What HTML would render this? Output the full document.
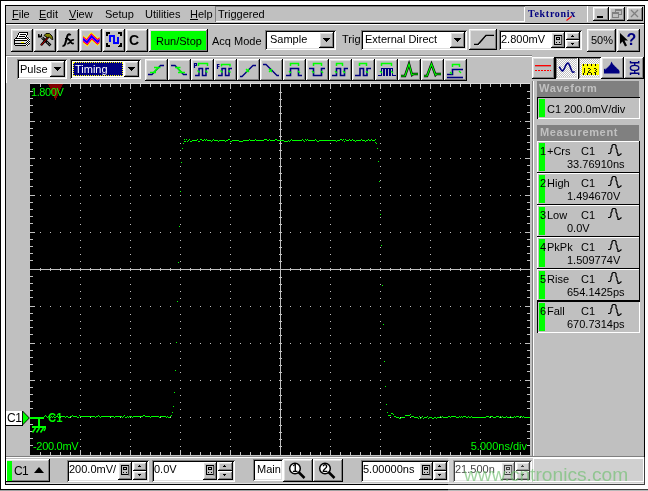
<!DOCTYPE html><html><head><meta charset="utf-8"><style>
html,body{margin:0;padding:0;}
body{width:648px;height:491px;position:relative;overflow:hidden;background:#fff;font-family:"Liberation Sans",sans-serif;}
body>div,body>svg{position:absolute;box-sizing:border-box;}
.t{white-space:nowrap;will-change:transform;}
svg{will-change:transform;}
.b{box-shadow:inset -1px -1px #000, inset 1px 1px #fff, inset -2px -2px #808080, inset 2px 2px #dfdfdf;}
.s{box-shadow:inset 1px 1px #808080, inset -1px -1px #fff, inset 2px 2px #000, inset -2px -2px #dfdfdf;}
u{text-decoration:underline;text-underline-offset:1px;}
</style></head><body>
<div style="left:0px;top:0px;width:648px;height:1px;background:#000;"></div>
<div style="left:0px;top:0px;width:1px;height:491px;background:#000;"></div>
<div style="left:0px;top:489px;width:648px;height:1px;background:#000;"></div>
<div style="left:0px;top:490px;width:648px;height:1px;background:#a0a0a0;"></div>
<div style="left:5px;top:5px;width:640px;height:480px;border:1px solid #000;background:#c0c0c0"></div>
<div style="left:6px;top:23px;width:638px;height:1px;background:#000;"></div>
<div style="left:6px;top:24px;width:638px;height:1px;background:#fff;"></div>
<div class="t" style="left:12px;top:9px;font-size:11px;line-height:11px;color:#000;font-weight:normal;font-family:'Liberation Sans', sans-serif;"><u>F</u>ile</div>
<div class="t" style="left:39px;top:9px;font-size:11px;line-height:11px;color:#000;font-weight:normal;font-family:'Liberation Sans', sans-serif;"><u>E</u>dit</div>
<div class="t" style="left:69px;top:9px;font-size:11px;line-height:11px;color:#000;font-weight:normal;font-family:'Liberation Sans', sans-serif;"><u>V</u>iew</div>
<div class="t" style="left:105px;top:9px;font-size:11px;line-height:11px;color:#000;font-weight:normal;font-family:'Liberation Sans', sans-serif;">Setup</div>
<div class="t" style="left:145px;top:9px;font-size:11px;line-height:11px;color:#000;font-weight:normal;font-family:'Liberation Sans', sans-serif;">Utilities</div>
<div class="t" style="left:190px;top:9px;font-size:11px;line-height:11px;color:#000;font-weight:normal;font-family:'Liberation Sans', sans-serif;"><u>H</u>elp</div>
<div style="left:215px;top:6px;width:310px;height:16px;box-shadow:inset 1px 1px #808080, inset -1px -1px #fff"></div>
<div class="t" style="left:218px;top:9px;font-size:11px;line-height:11px;color:#000;font-weight:normal;font-family:'Liberation Sans', sans-serif;">Triggered</div>
<div style="left:587px;top:6px;width:1px;height:16px;background:#fff;"></div>
<div class="t" style="left:528px;top:9px;font-size:10px;line-height:10px;color:#000080;font-weight:bold;font-family:'Liberation Serif', serif;letter-spacing:0.7px">Tektronix</div>
<svg style="left:565px;top:15px" width="8" height="7"><path d="M1.5 5.5L6.5 1.5" stroke="#f00" stroke-width="1.1"/></svg>
<div class="b" style="left:593px;top:7px;width:16px;height:14px;background:#c0c0c0;"></div>
<div style="left:597px;top:16px;width:6px;height:2px;background:#000;"></div>
<div class="b" style="left:609px;top:7px;width:16px;height:14px;background:#c0c0c0;"></div>
<div class="b" style="left:627px;top:7px;width:16px;height:14px;background:#c0c0c0;"></div>
<svg style="left:609px;top:7px" width="16" height="14"><g fill="none" stroke="#808080" stroke-width="1" shape-rendering="crispEdges"><rect x="6.5" y="2.5" width="6" height="5"/><line x1="6" y1="3.5" x2="13" y2="3.5"/><rect x="3.5" y="5.5" width="6" height="5" fill="#c0c0c0"/><line x1="3" y1="6.5" x2="10" y2="6.5"/></g></svg>
<svg style="left:627px;top:7px" width="16" height="14"><g stroke="#808080" stroke-width="1.3"><line x1="4" y1="3" x2="11" y2="10"/><line x1="11" y1="3" x2="4" y2="10"/></g></svg>
<div class="b" style="left:11px;top:29px;width:22px;height:23px;background:#c0c0c0;"></div>
<div class="b" style="left:34px;top:29px;width:22px;height:23px;background:#c0c0c0;"></div>
<div class="b" style="left:57px;top:29px;width:22px;height:23px;background:#c0c0c0;"></div>
<div class="b" style="left:80px;top:29px;width:22px;height:23px;background:#c0c0c0;"></div>
<div class="b" style="left:103px;top:29px;width:22px;height:23px;background:#c0c0c0;"></div>
<div class="b" style="left:126px;top:29px;width:22px;height:23px;background:#c0c0c0;"></div>
<div class="b" style="left:149px;top:29px;width:59px;height:23px;background:#c0c0c0;"></div>
<div style="left:151px;top:31px;width:55px;height:19px;background:#00ff00;"></div>
<div class="t" style="left:156px;top:36px;font-size:11px;line-height:11px;color:#000;font-weight:normal;font-family:'Liberation Sans', sans-serif;">Run/Stop</div>
<div class="t" style="left:212px;top:36px;font-size:11px;line-height:11px;color:#000;font-weight:normal;font-family:'Liberation Sans', sans-serif;">Acq Mode</div>
<div class="s" style="left:265px;top:30px;width:71px;height:20px;background:#fff;"></div>
<div class="b" style="left:319px;top:32px;width:15px;height:16px;background:#c0c0c0;"></div>
<svg style="left:323px;top:38px" width="7" height="4"><path d="M0 0h7l-3.5 4z" fill="#000" shape-rendering="crispEdges"/></svg>
<div class="t" style="left:270px;top:34px;font-size:11px;line-height:11px;color:#000;font-weight:normal;font-family:'Liberation Sans', sans-serif;">Sample</div>
<div class="t" style="left:342px;top:34px;font-size:11px;line-height:11px;color:#000;font-weight:normal;font-family:'Liberation Sans', sans-serif;">Trig</div>
<div class="s" style="left:361px;top:30px;width:106px;height:20px;background:#fff;"></div>
<div class="b" style="left:450px;top:32px;width:15px;height:16px;background:#c0c0c0;"></div>
<svg style="left:454px;top:38px" width="7" height="4"><path d="M0 0h7l-3.5 4z" fill="#000" shape-rendering="crispEdges"/></svg>
<div class="t" style="left:365px;top:34px;font-size:11px;line-height:11px;color:#000;font-weight:normal;font-family:'Liberation Sans', sans-serif;">External Direct</div>
<div class="b" style="left:469px;top:29px;width:28px;height:21px;background:#c0c0c0;"></div>
<svg style="left:469px;top:29px" width="28" height="21"><g fill="none" shape-rendering="crispEdges"><path d="M5 15.5h4l8-9h8" stroke="#fff" transform="translate(0,1)"/><path d="M5 15.5h4l8-9h8" stroke="#000" stroke-width="1.6" shape-rendering="auto"/></g></svg>
<div class="s" style="left:499px;top:30px;width:83px;height:20px;background:#fff;"></div>
<div class="t" style="left:501px;top:34px;font-size:11px;line-height:11px;color:#000;font-weight:normal;font-family:'Liberation Sans', sans-serif;">2.800mV</div>
<div class="b" style="left:551px;top:32px;width:14px;height:16px;background:#c0c0c0;"></div>
<svg style="left:551px;top:32px" width="14" height="16"><g fill="none" stroke="#000" shape-rendering="crispEdges"><rect x="3.5" y="3.5" width="7" height="9"/><rect x="5.5" y="5.5" width="3" height="2"/><path d="M5 10.5h1M8 10.5h1"/></g><path d="M11 4v10" stroke="#808080"/></svg>
<div class="b" style="left:566px;top:32px;width:14px;height:8px;background:#c0c0c0;"></div>
<div class="b" style="left:566px;top:40px;width:14px;height:8px;background:#c0c0c0;"></div>
<div style="left:572px;top:35px;width:1px;height:1px;background:#000;"></div>
<div style="left:571px;top:36px;width:3px;height:1px;background:#000;"></div>
<div style="left:571px;top:43px;width:3px;height:1px;background:#000;"></div>
<div style="left:572px;top:44px;width:1px;height:1px;background:#000;"></div>
<div class="b" style="left:587px;top:29px;width:29px;height:23px;background:#c0c0c0;"></div>
<div class="t" style="left:591px;top:35px;font-size:11px;line-height:11px;color:#000;font-weight:normal;font-family:'Liberation Sans', sans-serif;">50%</div>
<div class="b" style="left:617px;top:29px;width:23px;height:23px;background:#c0c0c0;"></div>
<svg style="left:617px;top:29px" width="23" height="23"><path d="M3 4V15L5.5 12.5 8 17.5 10 16.5 7.5 11.5H11Z" fill="#000"/><text x="9.5" y="15.5" font-family="Liberation Sans" font-weight="bold" font-size="16" fill="#000080">?</text></svg>
<div style="left:6px;top:55px;width:526px;height:1px;background:#808080;"></div>
<div style="left:6px;top:56px;width:526px;height:1px;background:#fff;"></div>
<svg style="left:11px;top:29px" width="22" height="23" shape-rendering="crispEdges"><rect x="8" y="3" width="1" height="1" fill="#000"/><rect x="9" y="3" width="1" height="1" fill="#000"/><rect x="10" y="3" width="1" height="1" fill="#000"/><rect x="11" y="3" width="1" height="1" fill="#000"/><rect x="12" y="3" width="1" height="1" fill="#000"/><rect x="13" y="3" width="1" height="1" fill="#000"/><rect x="14" y="3" width="1" height="1" fill="#000"/><rect x="15" y="3" width="1" height="1" fill="#000"/><rect x="16" y="3" width="1" height="1" fill="#000"/><rect x="7" y="4" width="1" height="1" fill="#000"/><rect x="16" y="4" width="1" height="1" fill="#000"/><rect x="8" y="4" width="1" height="1" fill="#fff"/><rect x="9" y="4" width="1" height="1" fill="#fff"/><rect x="10" y="4" width="1" height="1" fill="#fff"/><rect x="11" y="4" width="1" height="1" fill="#fff"/><rect x="12" y="4" width="1" height="1" fill="#fff"/><rect x="13" y="4" width="1" height="1" fill="#fff"/><rect x="14" y="4" width="1" height="1" fill="#fff"/><rect x="15" y="4" width="1" height="1" fill="#fff"/><rect x="7" y="5" width="1" height="1" fill="#000"/><rect x="16" y="5" width="1" height="1" fill="#000"/><rect x="8" y="5" width="1" height="1" fill="#fff"/><rect x="9" y="5" width="1" height="1" fill="#000"/><rect x="10" y="5" width="1" height="1" fill="#000"/><rect x="11" y="5" width="1" height="1" fill="#000"/><rect x="12" y="5" width="1" height="1" fill="#000"/><rect x="13" y="5" width="1" height="1" fill="#000"/><rect x="14" y="5" width="1" height="1" fill="#000"/><rect x="15" y="5" width="1" height="1" fill="#fff"/><rect x="6" y="6" width="1" height="1" fill="#000"/><rect x="15" y="6" width="1" height="1" fill="#000"/><rect x="7" y="6" width="1" height="1" fill="#fff"/><rect x="8" y="6" width="1" height="1" fill="#fff"/><rect x="9" y="6" width="1" height="1" fill="#fff"/><rect x="10" y="6" width="1" height="1" fill="#fff"/><rect x="11" y="6" width="1" height="1" fill="#fff"/><rect x="12" y="6" width="1" height="1" fill="#fff"/><rect x="13" y="6" width="1" height="1" fill="#fff"/><rect x="14" y="6" width="1" height="1" fill="#fff"/><rect x="6" y="7" width="1" height="1" fill="#000"/><rect x="15" y="7" width="1" height="1" fill="#000"/><rect x="7" y="7" width="1" height="1" fill="#fff"/><rect x="8" y="7" width="1" height="1" fill="#000"/><rect x="9" y="7" width="1" height="1" fill="#000"/><rect x="10" y="7" width="1" height="1" fill="#000"/><rect x="11" y="7" width="1" height="1" fill="#000"/><rect x="12" y="7" width="1" height="1" fill="#000"/><rect x="13" y="7" width="1" height="1" fill="#000"/><rect x="14" y="7" width="1" height="1" fill="#fff"/><rect x="5" y="8" width="1" height="1" fill="#000"/><rect x="14" y="8" width="1" height="1" fill="#000"/><rect x="6" y="8" width="1" height="1" fill="#fff"/><rect x="7" y="8" width="1" height="1" fill="#fff"/><rect x="8" y="8" width="1" height="1" fill="#fff"/><rect x="9" y="8" width="1" height="1" fill="#fff"/><rect x="10" y="8" width="1" height="1" fill="#fff"/><rect x="11" y="8" width="1" height="1" fill="#fff"/><rect x="12" y="8" width="1" height="1" fill="#fff"/><rect x="13" y="8" width="1" height="1" fill="#fff"/><rect x="4" y="9" width="1" height="1" fill="#000"/><rect x="5" y="9" width="1" height="1" fill="#000"/><rect x="6" y="9" width="1" height="1" fill="#000"/><rect x="7" y="9" width="1" height="1" fill="#000"/><rect x="8" y="9" width="1" height="1" fill="#000"/><rect x="9" y="9" width="1" height="1" fill="#000"/><rect x="10" y="9" width="1" height="1" fill="#000"/><rect x="11" y="9" width="1" height="1" fill="#000"/><rect x="12" y="9" width="1" height="1" fill="#000"/><rect x="13" y="9" width="1" height="1" fill="#000"/><rect x="14" y="9" width="1" height="1" fill="#000"/><rect x="15" y="9" width="1" height="1" fill="#000"/><rect x="3" y="10" width="1" height="1" fill="#000"/><rect x="3" y="11" width="1" height="1" fill="#000"/><rect x="3" y="12" width="1" height="1" fill="#000"/><rect x="3" y="13" width="1" height="1" fill="#000"/><rect x="3" y="14" width="1" height="1" fill="#000"/><rect x="3" y="15" width="1" height="1" fill="#000"/><rect x="4" y="10" width="1" height="1" fill="#fff"/><rect x="5" y="10" width="1" height="1" fill="#fff"/><rect x="6" y="10" width="1" height="1" fill="#fff"/><rect x="7" y="10" width="1" height="1" fill="#fff"/><rect x="8" y="10" width="1" height="1" fill="#fff"/><rect x="9" y="10" width="1" height="1" fill="#fff"/><rect x="10" y="10" width="1" height="1" fill="#fff"/><rect x="11" y="10" width="1" height="1" fill="#fff"/><rect x="12" y="10" width="1" height="1" fill="#fff"/><rect x="13" y="10" width="1" height="1" fill="#fff"/><rect x="14" y="10" width="1" height="1" fill="#fff"/><rect x="4" y="11" width="1" height="1" fill="#000"/><rect x="5" y="11" width="1" height="1" fill="#000"/><rect x="6" y="11" width="1" height="1" fill="#000"/><rect x="7" y="11" width="1" height="1" fill="#000"/><rect x="8" y="11" width="1" height="1" fill="#000"/><rect x="9" y="11" width="1" height="1" fill="#000"/><rect x="10" y="11" width="1" height="1" fill="#000"/><rect x="11" y="11" width="1" height="1" fill="#000"/><rect x="12" y="11" width="1" height="1" fill="#000"/><rect x="13" y="11" width="1" height="1" fill="#000"/><rect x="14" y="11" width="1" height="1" fill="#000"/><rect x="15" y="11" width="1" height="1" fill="#000"/><rect x="4" y="12" width="1" height="1" fill="#dfdfdf"/><rect x="4" y="13" width="1" height="1" fill="#dfdfdf"/><rect x="5" y="12" width="1" height="1" fill="#dfdfdf"/><rect x="5" y="13" width="1" height="1" fill="#dfdfdf"/><rect x="6" y="12" width="1" height="1" fill="#dfdfdf"/><rect x="6" y="13" width="1" height="1" fill="#dfdfdf"/><rect x="7" y="12" width="1" height="1" fill="#dfdfdf"/><rect x="7" y="13" width="1" height="1" fill="#dfdfdf"/><rect x="8" y="12" width="1" height="1" fill="#dfdfdf"/><rect x="8" y="13" width="1" height="1" fill="#dfdfdf"/><rect x="9" y="12" width="1" height="1" fill="#dfdfdf"/><rect x="9" y="13" width="1" height="1" fill="#dfdfdf"/><rect x="10" y="12" width="1" height="1" fill="#dfdfdf"/><rect x="10" y="13" width="1" height="1" fill="#ff0"/><rect x="11" y="12" width="1" height="1" fill="#dfdfdf"/><rect x="11" y="13" width="1" height="1" fill="#ff0"/><rect x="12" y="12" width="1" height="1" fill="#dfdfdf"/><rect x="12" y="13" width="1" height="1" fill="#ff0"/><rect x="13" y="12" width="1" height="1" fill="#dfdfdf"/><rect x="13" y="13" width="1" height="1" fill="#dfdfdf"/><rect x="14" y="12" width="1" height="1" fill="#dfdfdf"/><rect x="14" y="13" width="1" height="1" fill="#dfdfdf"/><rect x="4" y="14" width="1" height="1" fill="#000"/><rect x="5" y="14" width="1" height="1" fill="#000"/><rect x="6" y="14" width="1" height="1" fill="#000"/><rect x="7" y="14" width="1" height="1" fill="#000"/><rect x="8" y="14" width="1" height="1" fill="#000"/><rect x="9" y="14" width="1" height="1" fill="#000"/><rect x="10" y="14" width="1" height="1" fill="#000"/><rect x="11" y="14" width="1" height="1" fill="#000"/><rect x="12" y="14" width="1" height="1" fill="#000"/><rect x="13" y="14" width="1" height="1" fill="#000"/><rect x="14" y="14" width="1" height="1" fill="#000"/><rect x="15" y="14" width="1" height="1" fill="#fff"/><rect x="4" y="15" width="1" height="1" fill="#dfdfdf"/><rect x="5" y="15" width="1" height="1" fill="#dfdfdf"/><rect x="6" y="15" width="1" height="1" fill="#dfdfdf"/><rect x="7" y="15" width="1" height="1" fill="#dfdfdf"/><rect x="8" y="15" width="1" height="1" fill="#dfdfdf"/><rect x="9" y="15" width="1" height="1" fill="#dfdfdf"/><rect x="10" y="15" width="1" height="1" fill="#dfdfdf"/><rect x="11" y="15" width="1" height="1" fill="#dfdfdf"/><rect x="12" y="15" width="1" height="1" fill="#dfdfdf"/><rect x="13" y="15" width="1" height="1" fill="#dfdfdf"/><rect x="14" y="15" width="1" height="1" fill="#dfdfdf"/><rect x="4" y="16" width="1" height="1" fill="#000"/><rect x="5" y="16" width="1" height="1" fill="#000"/><rect x="6" y="16" width="1" height="1" fill="#000"/><rect x="7" y="16" width="1" height="1" fill="#000"/><rect x="8" y="16" width="1" height="1" fill="#000"/><rect x="9" y="16" width="1" height="1" fill="#000"/><rect x="10" y="16" width="1" height="1" fill="#000"/><rect x="11" y="16" width="1" height="1" fill="#000"/><rect x="12" y="16" width="1" height="1" fill="#000"/><rect x="13" y="16" width="1" height="1" fill="#000"/><rect x="14" y="16" width="1" height="1" fill="#000"/><rect x="15" y="16" width="1" height="1" fill="#fff"/><rect x="16" y="7" width="1" height="1" fill="#fff"/><rect x="15" y="8" width="1" height="1" fill="#fff"/><rect x="16" y="8" width="1" height="1" fill="#000"/><rect x="16" y="9" width="1" height="1" fill="#fff"/><rect x="17" y="9" width="1" height="1" fill="#000"/><rect x="18" y="9" width="1" height="1" fill="#fff"/><rect x="15" y="10" width="1" height="1" fill="#fff"/><rect x="16" y="10" width="1" height="1" fill="#000"/><rect x="17" y="10" width="1" height="1" fill="#fff"/><rect x="18" y="10" width="1" height="1" fill="#000"/><rect x="16" y="11" width="1" height="1" fill="#fff"/><rect x="17" y="11" width="1" height="1" fill="#000"/><rect x="18" y="11" width="1" height="1" fill="#fff"/><rect x="15" y="12" width="1" height="1" fill="#fff"/><rect x="16" y="12" width="1" height="1" fill="#000"/><rect x="17" y="12" width="1" height="1" fill="#fff"/><rect x="18" y="12" width="1" height="1" fill="#000"/><rect x="15" y="13" width="1" height="1" fill="#000"/><rect x="16" y="13" width="1" height="1" fill="#fff"/><rect x="17" y="13" width="1" height="1" fill="#000"/><rect x="18" y="13" width="1" height="1" fill="#fff"/><rect x="16" y="14" width="1" height="1" fill="#000"/><rect x="17" y="14" width="1" height="1" fill="#fff"/><rect x="18" y="14" width="1" height="1" fill="#000"/><rect x="15" y="15" width="1" height="1" fill="#000"/><rect x="16" y="15" width="1" height="1" fill="#fff"/><rect x="17" y="15" width="1" height="1" fill="#000"/><rect x="16" y="16" width="1" height="1" fill="#000"/><rect x="17" y="16" width="1" height="1" fill="#fff"/></svg>
<svg style="left:34px;top:29px" width="22" height="23">
<path d="M4 5h1.5v1.5h1.5V5h1v2.5l-1 1H4z" fill="#000"/>
<path d="M8 8.5l8.5 8" stroke="#000" stroke-width="2.8"/>
<path d="M8 8.5l8.5 8" stroke="#fff" stroke-width="0.9" stroke-dasharray="1 1.3"/>
<path d="M7 16.3l7.5-8.5" stroke="#000" stroke-width="2.4"/>
<path d="M7 16.3l7.5-8.5" stroke="#c00000" stroke-width="1"/>
<path d="M10 6.5L12 4.5H15.5L18 7 19 10.5 17.5 10.3 15.5 8 13.5 8.5Z" fill="#808000" stroke="#000" stroke-width="0.9"/>
</svg>
<svg style="left:57px;top:29px" width="22" height="23"><g fill="none" stroke="#000">
<path d="M13.5 6.3C12.8 4.8 11 4.8 10.4 6.8L8.2 14.8C7.8 16.4 6.8 17.2 5.5 16.6" stroke-width="2"/>
<path d="M8 9.6H11.8" stroke-width="1.2"/>
<path d="M10.5 11C12 10 12.9 11 13.5 12.5S15 15 16.8 14.3M17 11C15.6 10.4 14.5 11 13.5 12.5S11.8 15 10.3 14.5" stroke-width="1.7"/>
</g></svg>
<svg style="left:80px;top:29px" width="22" height="23"><defs><clipPath id="wc"><rect x="3" y="0" width="16.5" height="23"/></clipPath></defs><g fill="none" stroke-linejoin="miter" stroke-linecap="butt" clip-path="url(#wc)">
<path d="M0 7.8L7 13.2 11.5 7.4 17.5 12.8 21 10" stroke="#ff0" stroke-width="6"/>
<path d="M0 7.8L7 13.2 11.5 7.4 17.5 12.8 21 10" stroke="#f00" stroke-width="4.4"/>
<path d="M0 7.8L7 13.2 11.5 7.4 17.5 12.8 21 10" stroke="#f0f" stroke-width="3"/>
<path d="M0 7.8L7 13.2 11.5 7.4 17.5 12.8 21 10" stroke="#00f" stroke-width="1.8"/>
</g></svg>
<svg style="left:103px;top:29px" width="22" height="23" shape-rendering="crispEdges">
<path d="M3 3h4v2H5v2H3zM19 3h-4v2h2v2h2zM3 18h4v-2H5v-2H3zM19 18h-4v-2h2v-2h2z" fill="#000"/>
<path d="M6 6h10v10H6z" fill="none" stroke="#d8c8a8" stroke-width="1" stroke-dasharray="1 1"/>
<path d="M7 13V7h4v7h4V8" fill="none" stroke="#0000ff" stroke-width="2.2"/>
</svg>
<div class="t" style="left:129px;top:33px;font-size:14px;line-height:14px;color:#000;font-weight:bold;font-family:'Liberation Sans', sans-serif;">C</div>
<div style="left:6px;top:56px;width:1px;height:27px;background:#fff;"></div>
<div class="s" style="left:17px;top:59px;width:50px;height:20px;background:#fff;"></div>
<div class="b" style="left:50px;top:61px;width:15px;height:16px;background:#c0c0c0;"></div>
<svg style="left:54px;top:67px" width="7" height="4"><path d="M0 0h7l-3.5 4z" fill="#000" shape-rendering="crispEdges"/></svg>
<div class="t" style="left:20px;top:64px;font-size:11px;line-height:11px;color:#000;font-weight:normal;font-family:'Liberation Sans', sans-serif;">Pulse</div>
<div class="s" style="left:70px;top:59px;width:71px;height:20px;background:#fff;"></div>
<div class="b" style="left:124px;top:61px;width:15px;height:16px;background:#c0c0c0;"></div>
<svg style="left:128px;top:67px" width="7" height="4"><path d="M0 0h7l-3.5 4z" fill="#000" shape-rendering="crispEdges"/></svg>
<div style="left:73px;top:62px;width:50px;height:14px;background:#000080;outline:1px dotted #ff0;outline-offset:-1px"></div>
<div class="t" style="left:75px;top:64px;font-size:11px;line-height:11px;color:#fff;font-weight:normal;font-family:'Liberation Sans', sans-serif;">Timing</div>
<div class="b" style="left:145px;top:59px;width:23px;height:22px;background:#c0c0c0;"></div>
<div class="b" style="left:168px;top:59px;width:23px;height:22px;background:#c0c0c0;"></div>
<div class="b" style="left:191px;top:59px;width:23px;height:22px;background:#c0c0c0;"></div>
<div class="b" style="left:214px;top:59px;width:23px;height:22px;background:#c0c0c0;"></div>
<div class="b" style="left:237px;top:59px;width:23px;height:22px;background:#c0c0c0;"></div>
<div class="b" style="left:260px;top:59px;width:23px;height:22px;background:#c0c0c0;"></div>
<div class="b" style="left:283px;top:59px;width:23px;height:22px;background:#c0c0c0;"></div>
<div class="b" style="left:306px;top:59px;width:23px;height:22px;background:#c0c0c0;"></div>
<div class="b" style="left:329px;top:59px;width:23px;height:22px;background:#c0c0c0;"></div>
<div class="b" style="left:352px;top:59px;width:23px;height:22px;background:#c0c0c0;"></div>
<div class="b" style="left:375px;top:59px;width:23px;height:22px;background:#c0c0c0;"></div>
<div class="b" style="left:398px;top:59px;width:23px;height:22px;background:#c0c0c0;"></div>
<div class="b" style="left:421px;top:59px;width:23px;height:22px;background:#c0c0c0;"></div>
<div class="b" style="left:444px;top:59px;width:23px;height:22px;background:#c0c0c0;"></div>
<svg style="left:145px;top:59px" width="23" height="22"><g fill="none"><path d="M3 15.5h4l8.5-9h3.5" stroke="#000080" stroke-width="1.3"/><path d="M9 8.5h6.5M5 13.5h6M13.5 8.5l-5 5" stroke="#00ff00" stroke-width="1.6"/></g></svg>
<svg style="left:168px;top:59px" width="23" height="22"><g fill="none"><path d="M3 6.5h4l8.5 9h3.5" stroke="#000080" stroke-width="1.3"/><path d="M7 8.5h5.5M10 13.5h7M9 8.5l5 5" stroke="#00ff00" stroke-width="1.6"/></g></svg>
<svg style="left:191px;top:59px" width="23" height="22"><g fill="none"><path d="M3.5 9V4.5h2v2h-2" stroke="#000080" stroke-width="1.2"/><path d="M7.5 7V4.5h9V7" stroke="#00ff00" stroke-width="1.5"/><path d="M4 16.5h4V9.5h3.5v7h3.5V9.5h3" stroke="#000080" stroke-width="1.5"/><path d="M6.5 11.5l2 2M14.5 11.5l2 2" stroke="#00ff00" stroke-width="1.3"/></g></svg>
<svg style="left:214px;top:59px" width="23" height="22"><g fill="none"><path d="M5.5 5.5h-2V10M3.5 7.5h2" stroke="#000080" stroke-width="1.2"/><path d="M7.5 7.5V5.5h8.5v2" stroke="#00ff00" stroke-width="1.5"/><path d="M4 16.5h4V9.5h3.5v7h3.5V9.5h3" stroke="#000080" stroke-width="1.5"/><path d="M6.5 11.5l2 2M14.5 11.5l2 2" stroke="#00ff00" stroke-width="1.3"/></g></svg>
<svg style="left:237px;top:59px" width="23" height="22"><g fill="none"><path d="M3 17.5h2l11-11h3" stroke="#000080" stroke-width="1.3"/><path d="M9 10l3 3M12 10l-3 3" stroke="#00ff00" stroke-width="1.3"/></g></svg>
<svg style="left:260px;top:59px" width="23" height="22"><g fill="none"><path d="M3 5.5h3l11 11h2" stroke="#000080" stroke-width="1.3"/><path d="M9 10l3 3M12 10l-3 3" stroke="#00ff00" stroke-width="1.3"/></g></svg>
<svg style="left:283px;top:59px" width="23" height="22"><g fill="none"><path d="M7.5 7V4.5h8V7" stroke="#00ff00" stroke-width="1.5"/><path d="M3 16.5h4.5V9.5h8v7H19" stroke="#000080" stroke-width="1.6"/><path d="M6 12l2 2M15 12l2 2" stroke="#00ff00" stroke-width="1.3"/></g></svg>
<svg style="left:306px;top:59px" width="23" height="22"><g fill="none"><path d="M7.5 7V4.5h8V7" stroke="#00ff00" stroke-width="1.5"/><path d="M3 9.5h4.5v7h8v-7H19" stroke="#000080" stroke-width="1.6"/><path d="M6 12l2 2M15 12l2 2" stroke="#00ff00" stroke-width="1.3"/></g></svg>
<svg style="left:329px;top:59px" width="23" height="22"><g fill="none"><path d="M7.5 7V4.5h6V7" stroke="#00ff00" stroke-width="1.5"/><path d="M3 16.5h4.5V9.5h4v7h4v-7H19" stroke="#000080" stroke-width="1.6"/><path d="M6 12l2 2M14 12l2 2" stroke="#00ff00" stroke-width="1.3"/></g></svg>
<svg style="left:352px;top:59px" width="23" height="22"><g fill="none"><path d="M7.5 7V4.5h7V7" stroke="#00ff00" stroke-width="1.5"/><path d="M3 16.5h5V9.5h3.5v7H15V9.5h4" stroke="#000080" stroke-width="1.6"/><path d="M14 12l2 2" stroke="#00ff00" stroke-width="1.3"/></g></svg>
<svg style="left:375px;top:59px" width="23" height="22"><g fill="none"><path d="M6.5 7V4.5h10V7" stroke="#00ff00" stroke-width="1.5"/><path d="M3 16.5h3.5V9.5h2v7h1V9.5h2v7h1V9.5h2v7h1V9.5h2v7h3" stroke="#000080" stroke-width="1.1" shape-rendering="crispEdges"/><path d="M5 12l2 2M16 12l2 2" stroke="#00ff00" stroke-width="1.2"/></g></svg>
<svg style="left:398px;top:59px" width="23" height="22"><g fill="none"><path d="M3 17h4l4-12 3 11 1.5-1H20" stroke="#000" stroke-width="2.4"/><path d="M3 17h4l4-12 3 11 1.5-1H20" stroke="#00ff00" stroke-width="1.2"/></g></svg>
<svg style="left:421px;top:59px" width="23" height="22"><g fill="none"><path d="M3 17h3l4.5-12 4 11 1-1H20" stroke="#000" stroke-width="2.4"/><path d="M3 17h3l4.5-12 4 11 1-1H20" stroke="#00ff00" stroke-width="1.2"/></g></svg>
<svg style="left:444px;top:59px" width="23" height="22"><g fill="none"><path d="M8.5 8V5.5h7V8" stroke="#00ff00" stroke-width="1.5"/><path d="M3 15.5h5.5V10.5H19" stroke="#000080" stroke-width="1.6"/><path d="M3 18.5h16" stroke="#000080" stroke-width="1.6"/><path d="M6 13l2 2M15 12l2 2" stroke="#00ff00" stroke-width="1.3"/></g></svg>
<div class="b" style="left:532px;top:57px;width:23px;height:22px;background:#c0c0c0;"></div>
<div style="left:555px;top:57px;width:23px;height:22px;background-color:#fff;background-image:linear-gradient(45deg,#c0c0c0 25%,transparent 25%,transparent 75%,#c0c0c0 75%),linear-gradient(45deg,#c0c0c0 25%,transparent 25%,transparent 75%,#c0c0c0 75%);background-size:2px 2px;background-position:0 0,1px 1px;box-shadow:inset 1px 1px #000, inset -1px -1px #fff, inset 2px 2px #808080, inset -2px -2px #dfdfdf"></div>
<div style="left:578px;top:57px;width:23px;height:22px;background-color:#fff;background-image:linear-gradient(45deg,#c0c0c0 25%,transparent 25%,transparent 75%,#c0c0c0 75%),linear-gradient(45deg,#c0c0c0 25%,transparent 25%,transparent 75%,#c0c0c0 75%);background-size:2px 2px;background-position:0 0,1px 1px;box-shadow:inset 1px 1px #000, inset -1px -1px #fff, inset 2px 2px #808080, inset -2px -2px #dfdfdf"></div>
<div class="b" style="left:601px;top:57px;width:23px;height:22px;background:#c0c0c0;"></div>
<div class="b" style="left:624px;top:57px;width:20px;height:22px;background:#c0c0c0;"></div>
<svg style="left:532px;top:57px" width="23" height="22" shape-rendering="crispEdges"><path d="M3 8h16v1H3z" fill="#f00"/><path d="M3 9h16v1H3z" fill="#c04040" opacity="0.5"/><path d="M3 13h2v1H3zM6 13h2v1H6zM9 13h2v1H9zM12 13h2v1h-2zM15 13h2v1h-2zM18 13h1v1h-1z" fill="#f00"/></svg>
<svg style="left:555px;top:57px" width="23" height="22"><path d="M4.3 9.6C5.5 12 6.5 14 7.5 13.9 9.5 13.7 10.5 6.1 12.8 6.1 15 6.1 16 15.3 18 15.3 18.8 15.3 19.2 14.8 19.5 14.3" fill="none" stroke="#000080" stroke-width="1.6"/></svg>
<svg style="left:578px;top:57px" width="23" height="22" shape-rendering="crispEdges"><rect x="4" y="7" width="17" height="11" fill="#ff0"/><path d="M5 7h1v2H5zM9 7h1v2H9zM13 7h1v2h-1zM17 7h1v2h-1zM5 16h1v2H5zM9 16h1v2H9zM13 16h1v2h-1zM17 16h1v2h-1z" fill="#000"/><path d="M6 11h1v5H6zM10 11h2v1h-2zM12 12h1v1h-1zM11 13h1v1h-1zM10 14h1v1h-1zM10 15h3v1h-3zM16 11h2v1h-2zM18 12h1v1h-1zM17 13h1v1h-1zM18 14h1v1h-1zM16 15h2v1h-2z" fill="#000" opacity="0.85"/></svg>
<svg style="left:601px;top:57px" width="23" height="22"><path d="M3 16.5V12L4.5 11.5V13L6.5 9.8V11.3L8.5 7.8V9.3L10.5 4.5L12.5 8.3V7.3L14.5 10.3V9.3L16.5 12.3V11.3L18.5 14V16.5Z" fill="#000080"/></svg>
<svg style="left:624px;top:57px" width="20" height="22"><g fill="none" stroke="#000080" stroke-width="1.4"><path d="M6.5 4V5.8H14.7V4M10.7 5.8V8.3M10.7 13.5V16M6.5 18V16.2H14.7V18"/><ellipse cx="10.6" cy="10.9" rx="4.2" ry="2.5"/></g></svg>
<div style="left:532px;top:81px;width:1px;height:375px;background:#808080;"></div>
<div style="left:533px;top:81px;width:1px;height:375px;background:#fff;"></div>
<div style="left:537px;top:81px;width:102px;height:16px;background:#808080;"></div>
<div class="t" style="left:539px;top:83px;font-size:11px;line-height:11px;color:#c0c0c0;font-weight:bold;font-family:'Liberation Sans', sans-serif;letter-spacing:0.7px">Waveform</div>
<div style="left:537px;top:97px;width:103px;height:22px;box-shadow:inset 1px 1px #000, inset -1px -1px #fff"></div>
<div style="left:539px;top:99px;width:6px;height:18px;background:#00ff00;"></div>
<div class="t" style="left:547px;top:104px;font-size:11px;line-height:11px;color:#000;font-weight:normal;font-family:'Liberation Sans', sans-serif;">C1 200.0mV/div</div>
<div style="left:537px;top:125px;width:102px;height:16px;background:#808080;"></div>
<div class="t" style="left:540px;top:127px;font-size:11px;line-height:11px;color:#c0c0c0;font-weight:bold;font-family:'Liberation Sans', sans-serif;letter-spacing:0.65px">Measurement</div>
<div style="left:537px;top:141px;width:103px;height:32px;box-shadow:inset -1px -1px #000, inset 1px 1px #fff"></div>
<div style="left:539px;top:143px;width:6px;height:28px;background:#00ff00;"></div>
<div class="t" style="left:540px;top:146px;font-size:11px;line-height:11px;color:#000;font-weight:normal;font-family:'Liberation Sans', sans-serif;">1</div>
<div class="t" style="left:547px;top:146px;font-size:11px;line-height:11px;color:#000;font-weight:normal;font-family:'Liberation Sans', sans-serif;">+Crs</div>
<div class="t" style="left:581px;top:146px;font-size:11px;line-height:11px;color:#000;font-weight:normal;font-family:'Liberation Sans', sans-serif;">C1</div>
<svg style="left:605px;top:143px" width="18" height="14"><path d="M3 10.5H5L6 8.5V6L7 4.5V2.5L8 1.5H10L11 2.5V5L12 7V9L13 11V12.5H14L16.5 10.5" fill="none" stroke="#000" stroke-width="1.2"/></svg>
<div class="t" style="left:567px;top:159px;font-size:11px;line-height:11px;color:#000;font-weight:normal;font-family:'Liberation Sans', sans-serif;">33.76910ns</div>
<div style="left:537px;top:173px;width:103px;height:32px;box-shadow:inset -1px -1px #000, inset 1px 1px #fff"></div>
<div style="left:539px;top:175px;width:6px;height:28px;background:#00ff00;"></div>
<div class="t" style="left:540px;top:178px;font-size:11px;line-height:11px;color:#000;font-weight:normal;font-family:'Liberation Sans', sans-serif;">2</div>
<div class="t" style="left:547px;top:178px;font-size:11px;line-height:11px;color:#000;font-weight:normal;font-family:'Liberation Sans', sans-serif;">High</div>
<div class="t" style="left:581px;top:178px;font-size:11px;line-height:11px;color:#000;font-weight:normal;font-family:'Liberation Sans', sans-serif;">C1</div>
<svg style="left:605px;top:175px" width="18" height="14"><path d="M3 10.5H5L6 8.5V6L7 4.5V2.5L8 1.5H10L11 2.5V5L12 7V9L13 11V12.5H14L16.5 10.5" fill="none" stroke="#000" stroke-width="1.2"/></svg>
<div class="t" style="left:567px;top:191px;font-size:11px;line-height:11px;color:#000;font-weight:normal;font-family:'Liberation Sans', sans-serif;">1.494670V</div>
<div style="left:537px;top:205px;width:103px;height:32px;box-shadow:inset -1px -1px #000, inset 1px 1px #fff"></div>
<div style="left:539px;top:207px;width:6px;height:28px;background:#00ff00;"></div>
<div class="t" style="left:540px;top:210px;font-size:11px;line-height:11px;color:#000;font-weight:normal;font-family:'Liberation Sans', sans-serif;">3</div>
<div class="t" style="left:547px;top:210px;font-size:11px;line-height:11px;color:#000;font-weight:normal;font-family:'Liberation Sans', sans-serif;">Low</div>
<div class="t" style="left:581px;top:210px;font-size:11px;line-height:11px;color:#000;font-weight:normal;font-family:'Liberation Sans', sans-serif;">C1</div>
<svg style="left:605px;top:207px" width="18" height="14"><path d="M3 10.5H5L6 8.5V6L7 4.5V2.5L8 1.5H10L11 2.5V5L12 7V9L13 11V12.5H14L16.5 10.5" fill="none" stroke="#000" stroke-width="1.2"/></svg>
<div class="t" style="left:567px;top:223px;font-size:11px;line-height:11px;color:#000;font-weight:normal;font-family:'Liberation Sans', sans-serif;">0.0V</div>
<div style="left:537px;top:237px;width:103px;height:32px;box-shadow:inset -1px -1px #000, inset 1px 1px #fff"></div>
<div style="left:539px;top:239px;width:6px;height:28px;background:#00ff00;"></div>
<div class="t" style="left:540px;top:242px;font-size:11px;line-height:11px;color:#000;font-weight:normal;font-family:'Liberation Sans', sans-serif;">4</div>
<div class="t" style="left:547px;top:242px;font-size:11px;line-height:11px;color:#000;font-weight:normal;font-family:'Liberation Sans', sans-serif;">PkPk</div>
<div class="t" style="left:581px;top:242px;font-size:11px;line-height:11px;color:#000;font-weight:normal;font-family:'Liberation Sans', sans-serif;">C1</div>
<svg style="left:605px;top:239px" width="18" height="14"><path d="M3 10.5H5L6 8.5V6L7 4.5V2.5L8 1.5H10L11 2.5V5L12 7V9L13 11V12.5H14L16.5 10.5" fill="none" stroke="#000" stroke-width="1.2"/></svg>
<div class="t" style="left:567px;top:255px;font-size:11px;line-height:11px;color:#000;font-weight:normal;font-family:'Liberation Sans', sans-serif;">1.509774V</div>
<div style="left:537px;top:269px;width:103px;height:32px;box-shadow:inset -1px -1px #000, inset 1px 1px #fff"></div>
<div style="left:539px;top:271px;width:6px;height:28px;background:#00ff00;"></div>
<div class="t" style="left:540px;top:274px;font-size:11px;line-height:11px;color:#000;font-weight:normal;font-family:'Liberation Sans', sans-serif;">5</div>
<div class="t" style="left:547px;top:274px;font-size:11px;line-height:11px;color:#000;font-weight:normal;font-family:'Liberation Sans', sans-serif;">Rise</div>
<div class="t" style="left:581px;top:274px;font-size:11px;line-height:11px;color:#000;font-weight:normal;font-family:'Liberation Sans', sans-serif;">C1</div>
<svg style="left:605px;top:271px" width="18" height="14"><path d="M3 10.5H5L6 8.5V6L7 4.5V2.5L8 1.5H10L11 2.5V5L12 7V9L13 11V12.5H14L16.5 10.5" fill="none" stroke="#000" stroke-width="1.2"/></svg>
<div class="t" style="left:567px;top:287px;font-size:11px;line-height:11px;color:#000;font-weight:normal;font-family:'Liberation Sans', sans-serif;">654.1425ps</div>
<div style="left:537px;top:301px;width:103px;height:32px;box-shadow:inset 1px 1px #000, inset -1px -1px #fff"></div>
<div style="left:539px;top:303px;width:6px;height:28px;background:#00ff00;"></div>
<div class="t" style="left:540px;top:306px;font-size:11px;line-height:11px;color:#000;font-weight:normal;font-family:'Liberation Sans', sans-serif;">6</div>
<div class="t" style="left:547px;top:306px;font-size:11px;line-height:11px;color:#000;font-weight:normal;font-family:'Liberation Sans', sans-serif;">Fall</div>
<div class="t" style="left:581px;top:306px;font-size:11px;line-height:11px;color:#000;font-weight:normal;font-family:'Liberation Sans', sans-serif;">C1</div>
<svg style="left:605px;top:303px" width="18" height="14"><path d="M3 10.5H5L6 8.5V6L7 4.5V2.5L8 1.5H10L11 2.5V5L12 7V9L13 11V12.5H14L16.5 10.5" fill="none" stroke="#000" stroke-width="1.2"/></svg>
<div class="t" style="left:567px;top:319px;font-size:11px;line-height:11px;color:#000;font-weight:normal;font-family:'Liberation Sans', sans-serif;">670.7314ps</div>
<svg style="left:30px;top:84px" width="500" height="371" shape-rendering="crispEdges"><rect x="0" y="0" width="500" height="371" fill="#000"/><rect x="10" y="0" width="1" height="3" fill="#c0c0c0"/><rect x="10" y="368" width="1" height="3" fill="#c0c0c0"/><rect x="20" y="0" width="1" height="3" fill="#c0c0c0"/><rect x="20" y="368" width="1" height="3" fill="#c0c0c0"/><rect x="30" y="0" width="1" height="3" fill="#c0c0c0"/><rect x="30" y="368" width="1" height="3" fill="#c0c0c0"/><rect x="40" y="0" width="1" height="3" fill="#c0c0c0"/><rect x="40" y="368" width="1" height="3" fill="#c0c0c0"/><rect x="50" y="0" width="1" height="5" fill="#c0c0c0"/><rect x="50" y="366" width="1" height="5" fill="#c0c0c0"/><rect x="60" y="0" width="1" height="3" fill="#c0c0c0"/><rect x="60" y="368" width="1" height="3" fill="#c0c0c0"/><rect x="70" y="0" width="1" height="3" fill="#c0c0c0"/><rect x="70" y="368" width="1" height="3" fill="#c0c0c0"/><rect x="80" y="0" width="1" height="3" fill="#c0c0c0"/><rect x="80" y="368" width="1" height="3" fill="#c0c0c0"/><rect x="90" y="0" width="1" height="3" fill="#c0c0c0"/><rect x="90" y="368" width="1" height="3" fill="#c0c0c0"/><rect x="100" y="0" width="1" height="5" fill="#c0c0c0"/><rect x="100" y="366" width="1" height="5" fill="#c0c0c0"/><rect x="110" y="0" width="1" height="3" fill="#c0c0c0"/><rect x="110" y="368" width="1" height="3" fill="#c0c0c0"/><rect x="120" y="0" width="1" height="3" fill="#c0c0c0"/><rect x="120" y="368" width="1" height="3" fill="#c0c0c0"/><rect x="130" y="0" width="1" height="3" fill="#c0c0c0"/><rect x="130" y="368" width="1" height="3" fill="#c0c0c0"/><rect x="140" y="0" width="1" height="3" fill="#c0c0c0"/><rect x="140" y="368" width="1" height="3" fill="#c0c0c0"/><rect x="150" y="0" width="1" height="5" fill="#c0c0c0"/><rect x="150" y="366" width="1" height="5" fill="#c0c0c0"/><rect x="160" y="0" width="1" height="3" fill="#c0c0c0"/><rect x="160" y="368" width="1" height="3" fill="#c0c0c0"/><rect x="170" y="0" width="1" height="3" fill="#c0c0c0"/><rect x="170" y="368" width="1" height="3" fill="#c0c0c0"/><rect x="180" y="0" width="1" height="3" fill="#c0c0c0"/><rect x="180" y="368" width="1" height="3" fill="#c0c0c0"/><rect x="190" y="0" width="1" height="3" fill="#c0c0c0"/><rect x="190" y="368" width="1" height="3" fill="#c0c0c0"/><rect x="200" y="0" width="1" height="5" fill="#c0c0c0"/><rect x="200" y="366" width="1" height="5" fill="#c0c0c0"/><rect x="210" y="0" width="1" height="3" fill="#c0c0c0"/><rect x="210" y="368" width="1" height="3" fill="#c0c0c0"/><rect x="220" y="0" width="1" height="3" fill="#c0c0c0"/><rect x="220" y="368" width="1" height="3" fill="#c0c0c0"/><rect x="230" y="0" width="1" height="3" fill="#c0c0c0"/><rect x="230" y="368" width="1" height="3" fill="#c0c0c0"/><rect x="240" y="0" width="1" height="3" fill="#c0c0c0"/><rect x="240" y="368" width="1" height="3" fill="#c0c0c0"/><rect x="250" y="0" width="1" height="5" fill="#c0c0c0"/><rect x="250" y="366" width="1" height="5" fill="#c0c0c0"/><rect x="260" y="0" width="1" height="3" fill="#c0c0c0"/><rect x="260" y="368" width="1" height="3" fill="#c0c0c0"/><rect x="270" y="0" width="1" height="3" fill="#c0c0c0"/><rect x="270" y="368" width="1" height="3" fill="#c0c0c0"/><rect x="280" y="0" width="1" height="3" fill="#c0c0c0"/><rect x="280" y="368" width="1" height="3" fill="#c0c0c0"/><rect x="290" y="0" width="1" height="3" fill="#c0c0c0"/><rect x="290" y="368" width="1" height="3" fill="#c0c0c0"/><rect x="300" y="0" width="1" height="5" fill="#c0c0c0"/><rect x="300" y="366" width="1" height="5" fill="#c0c0c0"/><rect x="310" y="0" width="1" height="3" fill="#c0c0c0"/><rect x="310" y="368" width="1" height="3" fill="#c0c0c0"/><rect x="320" y="0" width="1" height="3" fill="#c0c0c0"/><rect x="320" y="368" width="1" height="3" fill="#c0c0c0"/><rect x="330" y="0" width="1" height="3" fill="#c0c0c0"/><rect x="330" y="368" width="1" height="3" fill="#c0c0c0"/><rect x="340" y="0" width="1" height="3" fill="#c0c0c0"/><rect x="340" y="368" width="1" height="3" fill="#c0c0c0"/><rect x="350" y="0" width="1" height="5" fill="#c0c0c0"/><rect x="350" y="366" width="1" height="5" fill="#c0c0c0"/><rect x="360" y="0" width="1" height="3" fill="#c0c0c0"/><rect x="360" y="368" width="1" height="3" fill="#c0c0c0"/><rect x="370" y="0" width="1" height="3" fill="#c0c0c0"/><rect x="370" y="368" width="1" height="3" fill="#c0c0c0"/><rect x="380" y="0" width="1" height="3" fill="#c0c0c0"/><rect x="380" y="368" width="1" height="3" fill="#c0c0c0"/><rect x="390" y="0" width="1" height="3" fill="#c0c0c0"/><rect x="390" y="368" width="1" height="3" fill="#c0c0c0"/><rect x="400" y="0" width="1" height="5" fill="#c0c0c0"/><rect x="400" y="366" width="1" height="5" fill="#c0c0c0"/><rect x="410" y="0" width="1" height="3" fill="#c0c0c0"/><rect x="410" y="368" width="1" height="3" fill="#c0c0c0"/><rect x="420" y="0" width="1" height="3" fill="#c0c0c0"/><rect x="420" y="368" width="1" height="3" fill="#c0c0c0"/><rect x="430" y="0" width="1" height="3" fill="#c0c0c0"/><rect x="430" y="368" width="1" height="3" fill="#c0c0c0"/><rect x="440" y="0" width="1" height="3" fill="#c0c0c0"/><rect x="440" y="368" width="1" height="3" fill="#c0c0c0"/><rect x="450" y="0" width="1" height="5" fill="#c0c0c0"/><rect x="450" y="366" width="1" height="5" fill="#c0c0c0"/><rect x="460" y="0" width="1" height="3" fill="#c0c0c0"/><rect x="460" y="368" width="1" height="3" fill="#c0c0c0"/><rect x="470" y="0" width="1" height="3" fill="#c0c0c0"/><rect x="470" y="368" width="1" height="3" fill="#c0c0c0"/><rect x="480" y="0" width="1" height="3" fill="#c0c0c0"/><rect x="480" y="368" width="1" height="3" fill="#c0c0c0"/><rect x="490" y="0" width="1" height="3" fill="#c0c0c0"/><rect x="490" y="368" width="1" height="3" fill="#c0c0c0"/><rect x="0" y="7" width="3" height="1" fill="#c0c0c0"/><rect x="497" y="7" width="3" height="1" fill="#c0c0c0"/><rect x="0" y="14" width="3" height="1" fill="#c0c0c0"/><rect x="497" y="14" width="3" height="1" fill="#c0c0c0"/><rect x="0" y="21" width="3" height="1" fill="#c0c0c0"/><rect x="497" y="21" width="3" height="1" fill="#c0c0c0"/><rect x="0" y="28" width="3" height="1" fill="#c0c0c0"/><rect x="497" y="28" width="3" height="1" fill="#c0c0c0"/><rect x="0" y="37" width="5" height="1" fill="#c0c0c0"/><rect x="495" y="37" width="5" height="1" fill="#c0c0c0"/><rect x="0" y="44" width="3" height="1" fill="#c0c0c0"/><rect x="497" y="44" width="3" height="1" fill="#c0c0c0"/><rect x="0" y="51" width="3" height="1" fill="#c0c0c0"/><rect x="497" y="51" width="3" height="1" fill="#c0c0c0"/><rect x="0" y="58" width="3" height="1" fill="#c0c0c0"/><rect x="497" y="58" width="3" height="1" fill="#c0c0c0"/><rect x="0" y="65" width="3" height="1" fill="#c0c0c0"/><rect x="497" y="65" width="3" height="1" fill="#c0c0c0"/><rect x="0" y="74" width="5" height="1" fill="#c0c0c0"/><rect x="495" y="74" width="5" height="1" fill="#c0c0c0"/><rect x="0" y="81" width="3" height="1" fill="#c0c0c0"/><rect x="497" y="81" width="3" height="1" fill="#c0c0c0"/><rect x="0" y="88" width="3" height="1" fill="#c0c0c0"/><rect x="497" y="88" width="3" height="1" fill="#c0c0c0"/><rect x="0" y="95" width="3" height="1" fill="#c0c0c0"/><rect x="497" y="95" width="3" height="1" fill="#c0c0c0"/><rect x="0" y="102" width="3" height="1" fill="#c0c0c0"/><rect x="497" y="102" width="3" height="1" fill="#c0c0c0"/><rect x="0" y="111" width="5" height="1" fill="#c0c0c0"/><rect x="495" y="111" width="5" height="1" fill="#c0c0c0"/><rect x="0" y="118" width="3" height="1" fill="#c0c0c0"/><rect x="497" y="118" width="3" height="1" fill="#c0c0c0"/><rect x="0" y="125" width="3" height="1" fill="#c0c0c0"/><rect x="497" y="125" width="3" height="1" fill="#c0c0c0"/><rect x="0" y="132" width="3" height="1" fill="#c0c0c0"/><rect x="497" y="132" width="3" height="1" fill="#c0c0c0"/><rect x="0" y="139" width="3" height="1" fill="#c0c0c0"/><rect x="497" y="139" width="3" height="1" fill="#c0c0c0"/><rect x="0" y="148" width="5" height="1" fill="#c0c0c0"/><rect x="495" y="148" width="5" height="1" fill="#c0c0c0"/><rect x="0" y="155" width="3" height="1" fill="#c0c0c0"/><rect x="497" y="155" width="3" height="1" fill="#c0c0c0"/><rect x="0" y="162" width="3" height="1" fill="#c0c0c0"/><rect x="497" y="162" width="3" height="1" fill="#c0c0c0"/><rect x="0" y="169" width="3" height="1" fill="#c0c0c0"/><rect x="497" y="169" width="3" height="1" fill="#c0c0c0"/><rect x="0" y="176" width="3" height="1" fill="#c0c0c0"/><rect x="497" y="176" width="3" height="1" fill="#c0c0c0"/><rect x="0" y="185" width="5" height="1" fill="#c0c0c0"/><rect x="495" y="185" width="5" height="1" fill="#c0c0c0"/><rect x="0" y="192" width="3" height="1" fill="#c0c0c0"/><rect x="497" y="192" width="3" height="1" fill="#c0c0c0"/><rect x="0" y="199" width="3" height="1" fill="#c0c0c0"/><rect x="497" y="199" width="3" height="1" fill="#c0c0c0"/><rect x="0" y="206" width="3" height="1" fill="#c0c0c0"/><rect x="497" y="206" width="3" height="1" fill="#c0c0c0"/><rect x="0" y="213" width="3" height="1" fill="#c0c0c0"/><rect x="497" y="213" width="3" height="1" fill="#c0c0c0"/><rect x="0" y="222" width="5" height="1" fill="#c0c0c0"/><rect x="495" y="222" width="5" height="1" fill="#c0c0c0"/><rect x="0" y="229" width="3" height="1" fill="#c0c0c0"/><rect x="497" y="229" width="3" height="1" fill="#c0c0c0"/><rect x="0" y="236" width="3" height="1" fill="#c0c0c0"/><rect x="497" y="236" width="3" height="1" fill="#c0c0c0"/><rect x="0" y="243" width="3" height="1" fill="#c0c0c0"/><rect x="497" y="243" width="3" height="1" fill="#c0c0c0"/><rect x="0" y="250" width="3" height="1" fill="#c0c0c0"/><rect x="497" y="250" width="3" height="1" fill="#c0c0c0"/><rect x="0" y="259" width="5" height="1" fill="#c0c0c0"/><rect x="495" y="259" width="5" height="1" fill="#c0c0c0"/><rect x="0" y="266" width="3" height="1" fill="#c0c0c0"/><rect x="497" y="266" width="3" height="1" fill="#c0c0c0"/><rect x="0" y="273" width="3" height="1" fill="#c0c0c0"/><rect x="497" y="273" width="3" height="1" fill="#c0c0c0"/><rect x="0" y="280" width="3" height="1" fill="#c0c0c0"/><rect x="497" y="280" width="3" height="1" fill="#c0c0c0"/><rect x="0" y="287" width="3" height="1" fill="#c0c0c0"/><rect x="497" y="287" width="3" height="1" fill="#c0c0c0"/><rect x="0" y="296" width="5" height="1" fill="#c0c0c0"/><rect x="495" y="296" width="5" height="1" fill="#c0c0c0"/><rect x="0" y="303" width="3" height="1" fill="#c0c0c0"/><rect x="497" y="303" width="3" height="1" fill="#c0c0c0"/><rect x="0" y="310" width="3" height="1" fill="#c0c0c0"/><rect x="497" y="310" width="3" height="1" fill="#c0c0c0"/><rect x="0" y="317" width="3" height="1" fill="#c0c0c0"/><rect x="497" y="317" width="3" height="1" fill="#c0c0c0"/><rect x="0" y="324" width="3" height="1" fill="#c0c0c0"/><rect x="497" y="324" width="3" height="1" fill="#c0c0c0"/><rect x="0" y="333" width="5" height="1" fill="#c0c0c0"/><rect x="495" y="333" width="5" height="1" fill="#c0c0c0"/><rect x="0" y="340" width="3" height="1" fill="#c0c0c0"/><rect x="497" y="340" width="3" height="1" fill="#c0c0c0"/><rect x="0" y="347" width="3" height="1" fill="#c0c0c0"/><rect x="497" y="347" width="3" height="1" fill="#c0c0c0"/><rect x="0" y="354" width="3" height="1" fill="#c0c0c0"/><rect x="497" y="354" width="3" height="1" fill="#c0c0c0"/><rect x="0" y="361" width="3" height="1" fill="#c0c0c0"/><rect x="497" y="361" width="3" height="1" fill="#c0c0c0"/><rect x="10" y="37" width="1" height="1" fill="#c0c0c0"/><rect x="20" y="37" width="1" height="1" fill="#c0c0c0"/><rect x="30" y="37" width="1" height="1" fill="#c0c0c0"/><rect x="40" y="37" width="1" height="1" fill="#c0c0c0"/><rect x="60" y="37" width="1" height="1" fill="#c0c0c0"/><rect x="70" y="37" width="1" height="1" fill="#c0c0c0"/><rect x="80" y="37" width="1" height="1" fill="#c0c0c0"/><rect x="90" y="37" width="1" height="1" fill="#c0c0c0"/><rect x="110" y="37" width="1" height="1" fill="#c0c0c0"/><rect x="120" y="37" width="1" height="1" fill="#c0c0c0"/><rect x="130" y="37" width="1" height="1" fill="#c0c0c0"/><rect x="140" y="37" width="1" height="1" fill="#c0c0c0"/><rect x="160" y="37" width="1" height="1" fill="#c0c0c0"/><rect x="170" y="37" width="1" height="1" fill="#c0c0c0"/><rect x="180" y="37" width="1" height="1" fill="#c0c0c0"/><rect x="190" y="37" width="1" height="1" fill="#c0c0c0"/><rect x="210" y="37" width="1" height="1" fill="#c0c0c0"/><rect x="220" y="37" width="1" height="1" fill="#c0c0c0"/><rect x="230" y="37" width="1" height="1" fill="#c0c0c0"/><rect x="240" y="37" width="1" height="1" fill="#c0c0c0"/><rect x="260" y="37" width="1" height="1" fill="#c0c0c0"/><rect x="270" y="37" width="1" height="1" fill="#c0c0c0"/><rect x="280" y="37" width="1" height="1" fill="#c0c0c0"/><rect x="290" y="37" width="1" height="1" fill="#c0c0c0"/><rect x="310" y="37" width="1" height="1" fill="#c0c0c0"/><rect x="320" y="37" width="1" height="1" fill="#c0c0c0"/><rect x="330" y="37" width="1" height="1" fill="#c0c0c0"/><rect x="340" y="37" width="1" height="1" fill="#c0c0c0"/><rect x="360" y="37" width="1" height="1" fill="#c0c0c0"/><rect x="370" y="37" width="1" height="1" fill="#c0c0c0"/><rect x="380" y="37" width="1" height="1" fill="#c0c0c0"/><rect x="390" y="37" width="1" height="1" fill="#c0c0c0"/><rect x="410" y="37" width="1" height="1" fill="#c0c0c0"/><rect x="420" y="37" width="1" height="1" fill="#c0c0c0"/><rect x="430" y="37" width="1" height="1" fill="#c0c0c0"/><rect x="440" y="37" width="1" height="1" fill="#c0c0c0"/><rect x="460" y="37" width="1" height="1" fill="#c0c0c0"/><rect x="470" y="37" width="1" height="1" fill="#c0c0c0"/><rect x="480" y="37" width="1" height="1" fill="#c0c0c0"/><rect x="490" y="37" width="1" height="1" fill="#c0c0c0"/><rect x="10" y="74" width="1" height="1" fill="#c0c0c0"/><rect x="20" y="74" width="1" height="1" fill="#c0c0c0"/><rect x="30" y="74" width="1" height="1" fill="#c0c0c0"/><rect x="40" y="74" width="1" height="1" fill="#c0c0c0"/><rect x="60" y="74" width="1" height="1" fill="#c0c0c0"/><rect x="70" y="74" width="1" height="1" fill="#c0c0c0"/><rect x="80" y="74" width="1" height="1" fill="#c0c0c0"/><rect x="90" y="74" width="1" height="1" fill="#c0c0c0"/><rect x="110" y="74" width="1" height="1" fill="#c0c0c0"/><rect x="120" y="74" width="1" height="1" fill="#c0c0c0"/><rect x="130" y="74" width="1" height="1" fill="#c0c0c0"/><rect x="140" y="74" width="1" height="1" fill="#c0c0c0"/><rect x="160" y="74" width="1" height="1" fill="#c0c0c0"/><rect x="170" y="74" width="1" height="1" fill="#c0c0c0"/><rect x="180" y="74" width="1" height="1" fill="#c0c0c0"/><rect x="190" y="74" width="1" height="1" fill="#c0c0c0"/><rect x="210" y="74" width="1" height="1" fill="#c0c0c0"/><rect x="220" y="74" width="1" height="1" fill="#c0c0c0"/><rect x="230" y="74" width="1" height="1" fill="#c0c0c0"/><rect x="240" y="74" width="1" height="1" fill="#c0c0c0"/><rect x="260" y="74" width="1" height="1" fill="#c0c0c0"/><rect x="270" y="74" width="1" height="1" fill="#c0c0c0"/><rect x="280" y="74" width="1" height="1" fill="#c0c0c0"/><rect x="290" y="74" width="1" height="1" fill="#c0c0c0"/><rect x="310" y="74" width="1" height="1" fill="#c0c0c0"/><rect x="320" y="74" width="1" height="1" fill="#c0c0c0"/><rect x="330" y="74" width="1" height="1" fill="#c0c0c0"/><rect x="340" y="74" width="1" height="1" fill="#c0c0c0"/><rect x="360" y="74" width="1" height="1" fill="#c0c0c0"/><rect x="370" y="74" width="1" height="1" fill="#c0c0c0"/><rect x="380" y="74" width="1" height="1" fill="#c0c0c0"/><rect x="390" y="74" width="1" height="1" fill="#c0c0c0"/><rect x="410" y="74" width="1" height="1" fill="#c0c0c0"/><rect x="420" y="74" width="1" height="1" fill="#c0c0c0"/><rect x="430" y="74" width="1" height="1" fill="#c0c0c0"/><rect x="440" y="74" width="1" height="1" fill="#c0c0c0"/><rect x="460" y="74" width="1" height="1" fill="#c0c0c0"/><rect x="470" y="74" width="1" height="1" fill="#c0c0c0"/><rect x="480" y="74" width="1" height="1" fill="#c0c0c0"/><rect x="490" y="74" width="1" height="1" fill="#c0c0c0"/><rect x="10" y="111" width="1" height="1" fill="#c0c0c0"/><rect x="20" y="111" width="1" height="1" fill="#c0c0c0"/><rect x="30" y="111" width="1" height="1" fill="#c0c0c0"/><rect x="40" y="111" width="1" height="1" fill="#c0c0c0"/><rect x="60" y="111" width="1" height="1" fill="#c0c0c0"/><rect x="70" y="111" width="1" height="1" fill="#c0c0c0"/><rect x="80" y="111" width="1" height="1" fill="#c0c0c0"/><rect x="90" y="111" width="1" height="1" fill="#c0c0c0"/><rect x="110" y="111" width="1" height="1" fill="#c0c0c0"/><rect x="120" y="111" width="1" height="1" fill="#c0c0c0"/><rect x="130" y="111" width="1" height="1" fill="#c0c0c0"/><rect x="140" y="111" width="1" height="1" fill="#c0c0c0"/><rect x="160" y="111" width="1" height="1" fill="#c0c0c0"/><rect x="170" y="111" width="1" height="1" fill="#c0c0c0"/><rect x="180" y="111" width="1" height="1" fill="#c0c0c0"/><rect x="190" y="111" width="1" height="1" fill="#c0c0c0"/><rect x="210" y="111" width="1" height="1" fill="#c0c0c0"/><rect x="220" y="111" width="1" height="1" fill="#c0c0c0"/><rect x="230" y="111" width="1" height="1" fill="#c0c0c0"/><rect x="240" y="111" width="1" height="1" fill="#c0c0c0"/><rect x="260" y="111" width="1" height="1" fill="#c0c0c0"/><rect x="270" y="111" width="1" height="1" fill="#c0c0c0"/><rect x="280" y="111" width="1" height="1" fill="#c0c0c0"/><rect x="290" y="111" width="1" height="1" fill="#c0c0c0"/><rect x="310" y="111" width="1" height="1" fill="#c0c0c0"/><rect x="320" y="111" width="1" height="1" fill="#c0c0c0"/><rect x="330" y="111" width="1" height="1" fill="#c0c0c0"/><rect x="340" y="111" width="1" height="1" fill="#c0c0c0"/><rect x="360" y="111" width="1" height="1" fill="#c0c0c0"/><rect x="370" y="111" width="1" height="1" fill="#c0c0c0"/><rect x="380" y="111" width="1" height="1" fill="#c0c0c0"/><rect x="390" y="111" width="1" height="1" fill="#c0c0c0"/><rect x="410" y="111" width="1" height="1" fill="#c0c0c0"/><rect x="420" y="111" width="1" height="1" fill="#c0c0c0"/><rect x="430" y="111" width="1" height="1" fill="#c0c0c0"/><rect x="440" y="111" width="1" height="1" fill="#c0c0c0"/><rect x="460" y="111" width="1" height="1" fill="#c0c0c0"/><rect x="470" y="111" width="1" height="1" fill="#c0c0c0"/><rect x="480" y="111" width="1" height="1" fill="#c0c0c0"/><rect x="490" y="111" width="1" height="1" fill="#c0c0c0"/><rect x="10" y="148" width="1" height="1" fill="#c0c0c0"/><rect x="20" y="148" width="1" height="1" fill="#c0c0c0"/><rect x="30" y="148" width="1" height="1" fill="#c0c0c0"/><rect x="40" y="148" width="1" height="1" fill="#c0c0c0"/><rect x="60" y="148" width="1" height="1" fill="#c0c0c0"/><rect x="70" y="148" width="1" height="1" fill="#c0c0c0"/><rect x="80" y="148" width="1" height="1" fill="#c0c0c0"/><rect x="90" y="148" width="1" height="1" fill="#c0c0c0"/><rect x="110" y="148" width="1" height="1" fill="#c0c0c0"/><rect x="120" y="148" width="1" height="1" fill="#c0c0c0"/><rect x="130" y="148" width="1" height="1" fill="#c0c0c0"/><rect x="140" y="148" width="1" height="1" fill="#c0c0c0"/><rect x="160" y="148" width="1" height="1" fill="#c0c0c0"/><rect x="170" y="148" width="1" height="1" fill="#c0c0c0"/><rect x="180" y="148" width="1" height="1" fill="#c0c0c0"/><rect x="190" y="148" width="1" height="1" fill="#c0c0c0"/><rect x="210" y="148" width="1" height="1" fill="#c0c0c0"/><rect x="220" y="148" width="1" height="1" fill="#c0c0c0"/><rect x="230" y="148" width="1" height="1" fill="#c0c0c0"/><rect x="240" y="148" width="1" height="1" fill="#c0c0c0"/><rect x="260" y="148" width="1" height="1" fill="#c0c0c0"/><rect x="270" y="148" width="1" height="1" fill="#c0c0c0"/><rect x="280" y="148" width="1" height="1" fill="#c0c0c0"/><rect x="290" y="148" width="1" height="1" fill="#c0c0c0"/><rect x="310" y="148" width="1" height="1" fill="#c0c0c0"/><rect x="320" y="148" width="1" height="1" fill="#c0c0c0"/><rect x="330" y="148" width="1" height="1" fill="#c0c0c0"/><rect x="340" y="148" width="1" height="1" fill="#c0c0c0"/><rect x="360" y="148" width="1" height="1" fill="#c0c0c0"/><rect x="370" y="148" width="1" height="1" fill="#c0c0c0"/><rect x="380" y="148" width="1" height="1" fill="#c0c0c0"/><rect x="390" y="148" width="1" height="1" fill="#c0c0c0"/><rect x="410" y="148" width="1" height="1" fill="#c0c0c0"/><rect x="420" y="148" width="1" height="1" fill="#c0c0c0"/><rect x="430" y="148" width="1" height="1" fill="#c0c0c0"/><rect x="440" y="148" width="1" height="1" fill="#c0c0c0"/><rect x="460" y="148" width="1" height="1" fill="#c0c0c0"/><rect x="470" y="148" width="1" height="1" fill="#c0c0c0"/><rect x="480" y="148" width="1" height="1" fill="#c0c0c0"/><rect x="490" y="148" width="1" height="1" fill="#c0c0c0"/><rect x="0" y="185" width="500" height="1" fill="#c0c0c0"/><rect x="10" y="184" width="1" height="3" fill="#c0c0c0"/><rect x="20" y="184" width="1" height="3" fill="#c0c0c0"/><rect x="30" y="184" width="1" height="3" fill="#c0c0c0"/><rect x="40" y="184" width="1" height="3" fill="#c0c0c0"/><rect x="50" y="184" width="1" height="3" fill="#c0c0c0"/><rect x="60" y="184" width="1" height="3" fill="#c0c0c0"/><rect x="70" y="184" width="1" height="3" fill="#c0c0c0"/><rect x="80" y="184" width="1" height="3" fill="#c0c0c0"/><rect x="90" y="184" width="1" height="3" fill="#c0c0c0"/><rect x="100" y="184" width="1" height="3" fill="#c0c0c0"/><rect x="110" y="184" width="1" height="3" fill="#c0c0c0"/><rect x="120" y="184" width="1" height="3" fill="#c0c0c0"/><rect x="130" y="184" width="1" height="3" fill="#c0c0c0"/><rect x="140" y="184" width="1" height="3" fill="#c0c0c0"/><rect x="150" y="184" width="1" height="3" fill="#c0c0c0"/><rect x="160" y="184" width="1" height="3" fill="#c0c0c0"/><rect x="170" y="184" width="1" height="3" fill="#c0c0c0"/><rect x="180" y="184" width="1" height="3" fill="#c0c0c0"/><rect x="190" y="184" width="1" height="3" fill="#c0c0c0"/><rect x="200" y="184" width="1" height="3" fill="#c0c0c0"/><rect x="210" y="184" width="1" height="3" fill="#c0c0c0"/><rect x="220" y="184" width="1" height="3" fill="#c0c0c0"/><rect x="230" y="184" width="1" height="3" fill="#c0c0c0"/><rect x="240" y="184" width="1" height="3" fill="#c0c0c0"/><rect x="250" y="184" width="1" height="3" fill="#c0c0c0"/><rect x="260" y="184" width="1" height="3" fill="#c0c0c0"/><rect x="270" y="184" width="1" height="3" fill="#c0c0c0"/><rect x="280" y="184" width="1" height="3" fill="#c0c0c0"/><rect x="290" y="184" width="1" height="3" fill="#c0c0c0"/><rect x="300" y="184" width="1" height="3" fill="#c0c0c0"/><rect x="310" y="184" width="1" height="3" fill="#c0c0c0"/><rect x="320" y="184" width="1" height="3" fill="#c0c0c0"/><rect x="330" y="184" width="1" height="3" fill="#c0c0c0"/><rect x="340" y="184" width="1" height="3" fill="#c0c0c0"/><rect x="350" y="184" width="1" height="3" fill="#c0c0c0"/><rect x="360" y="184" width="1" height="3" fill="#c0c0c0"/><rect x="370" y="184" width="1" height="3" fill="#c0c0c0"/><rect x="380" y="184" width="1" height="3" fill="#c0c0c0"/><rect x="390" y="184" width="1" height="3" fill="#c0c0c0"/><rect x="400" y="184" width="1" height="3" fill="#c0c0c0"/><rect x="410" y="184" width="1" height="3" fill="#c0c0c0"/><rect x="420" y="184" width="1" height="3" fill="#c0c0c0"/><rect x="430" y="184" width="1" height="3" fill="#c0c0c0"/><rect x="440" y="184" width="1" height="3" fill="#c0c0c0"/><rect x="450" y="184" width="1" height="3" fill="#c0c0c0"/><rect x="460" y="184" width="1" height="3" fill="#c0c0c0"/><rect x="470" y="184" width="1" height="3" fill="#c0c0c0"/><rect x="480" y="184" width="1" height="3" fill="#c0c0c0"/><rect x="490" y="184" width="1" height="3" fill="#c0c0c0"/><rect x="10" y="222" width="1" height="1" fill="#c0c0c0"/><rect x="20" y="222" width="1" height="1" fill="#c0c0c0"/><rect x="30" y="222" width="1" height="1" fill="#c0c0c0"/><rect x="40" y="222" width="1" height="1" fill="#c0c0c0"/><rect x="60" y="222" width="1" height="1" fill="#c0c0c0"/><rect x="70" y="222" width="1" height="1" fill="#c0c0c0"/><rect x="80" y="222" width="1" height="1" fill="#c0c0c0"/><rect x="90" y="222" width="1" height="1" fill="#c0c0c0"/><rect x="110" y="222" width="1" height="1" fill="#c0c0c0"/><rect x="120" y="222" width="1" height="1" fill="#c0c0c0"/><rect x="130" y="222" width="1" height="1" fill="#c0c0c0"/><rect x="140" y="222" width="1" height="1" fill="#c0c0c0"/><rect x="160" y="222" width="1" height="1" fill="#c0c0c0"/><rect x="170" y="222" width="1" height="1" fill="#c0c0c0"/><rect x="180" y="222" width="1" height="1" fill="#c0c0c0"/><rect x="190" y="222" width="1" height="1" fill="#c0c0c0"/><rect x="210" y="222" width="1" height="1" fill="#c0c0c0"/><rect x="220" y="222" width="1" height="1" fill="#c0c0c0"/><rect x="230" y="222" width="1" height="1" fill="#c0c0c0"/><rect x="240" y="222" width="1" height="1" fill="#c0c0c0"/><rect x="260" y="222" width="1" height="1" fill="#c0c0c0"/><rect x="270" y="222" width="1" height="1" fill="#c0c0c0"/><rect x="280" y="222" width="1" height="1" fill="#c0c0c0"/><rect x="290" y="222" width="1" height="1" fill="#c0c0c0"/><rect x="310" y="222" width="1" height="1" fill="#c0c0c0"/><rect x="320" y="222" width="1" height="1" fill="#c0c0c0"/><rect x="330" y="222" width="1" height="1" fill="#c0c0c0"/><rect x="340" y="222" width="1" height="1" fill="#c0c0c0"/><rect x="360" y="222" width="1" height="1" fill="#c0c0c0"/><rect x="370" y="222" width="1" height="1" fill="#c0c0c0"/><rect x="380" y="222" width="1" height="1" fill="#c0c0c0"/><rect x="390" y="222" width="1" height="1" fill="#c0c0c0"/><rect x="410" y="222" width="1" height="1" fill="#c0c0c0"/><rect x="420" y="222" width="1" height="1" fill="#c0c0c0"/><rect x="430" y="222" width="1" height="1" fill="#c0c0c0"/><rect x="440" y="222" width="1" height="1" fill="#c0c0c0"/><rect x="460" y="222" width="1" height="1" fill="#c0c0c0"/><rect x="470" y="222" width="1" height="1" fill="#c0c0c0"/><rect x="480" y="222" width="1" height="1" fill="#c0c0c0"/><rect x="490" y="222" width="1" height="1" fill="#c0c0c0"/><rect x="10" y="259" width="1" height="1" fill="#c0c0c0"/><rect x="20" y="259" width="1" height="1" fill="#c0c0c0"/><rect x="30" y="259" width="1" height="1" fill="#c0c0c0"/><rect x="40" y="259" width="1" height="1" fill="#c0c0c0"/><rect x="60" y="259" width="1" height="1" fill="#c0c0c0"/><rect x="70" y="259" width="1" height="1" fill="#c0c0c0"/><rect x="80" y="259" width="1" height="1" fill="#c0c0c0"/><rect x="90" y="259" width="1" height="1" fill="#c0c0c0"/><rect x="110" y="259" width="1" height="1" fill="#c0c0c0"/><rect x="120" y="259" width="1" height="1" fill="#c0c0c0"/><rect x="130" y="259" width="1" height="1" fill="#c0c0c0"/><rect x="140" y="259" width="1" height="1" fill="#c0c0c0"/><rect x="160" y="259" width="1" height="1" fill="#c0c0c0"/><rect x="170" y="259" width="1" height="1" fill="#c0c0c0"/><rect x="180" y="259" width="1" height="1" fill="#c0c0c0"/><rect x="190" y="259" width="1" height="1" fill="#c0c0c0"/><rect x="210" y="259" width="1" height="1" fill="#c0c0c0"/><rect x="220" y="259" width="1" height="1" fill="#c0c0c0"/><rect x="230" y="259" width="1" height="1" fill="#c0c0c0"/><rect x="240" y="259" width="1" height="1" fill="#c0c0c0"/><rect x="260" y="259" width="1" height="1" fill="#c0c0c0"/><rect x="270" y="259" width="1" height="1" fill="#c0c0c0"/><rect x="280" y="259" width="1" height="1" fill="#c0c0c0"/><rect x="290" y="259" width="1" height="1" fill="#c0c0c0"/><rect x="310" y="259" width="1" height="1" fill="#c0c0c0"/><rect x="320" y="259" width="1" height="1" fill="#c0c0c0"/><rect x="330" y="259" width="1" height="1" fill="#c0c0c0"/><rect x="340" y="259" width="1" height="1" fill="#c0c0c0"/><rect x="360" y="259" width="1" height="1" fill="#c0c0c0"/><rect x="370" y="259" width="1" height="1" fill="#c0c0c0"/><rect x="380" y="259" width="1" height="1" fill="#c0c0c0"/><rect x="390" y="259" width="1" height="1" fill="#c0c0c0"/><rect x="410" y="259" width="1" height="1" fill="#c0c0c0"/><rect x="420" y="259" width="1" height="1" fill="#c0c0c0"/><rect x="430" y="259" width="1" height="1" fill="#c0c0c0"/><rect x="440" y="259" width="1" height="1" fill="#c0c0c0"/><rect x="460" y="259" width="1" height="1" fill="#c0c0c0"/><rect x="470" y="259" width="1" height="1" fill="#c0c0c0"/><rect x="480" y="259" width="1" height="1" fill="#c0c0c0"/><rect x="490" y="259" width="1" height="1" fill="#c0c0c0"/><rect x="10" y="296" width="1" height="1" fill="#c0c0c0"/><rect x="20" y="296" width="1" height="1" fill="#c0c0c0"/><rect x="30" y="296" width="1" height="1" fill="#c0c0c0"/><rect x="40" y="296" width="1" height="1" fill="#c0c0c0"/><rect x="60" y="296" width="1" height="1" fill="#c0c0c0"/><rect x="70" y="296" width="1" height="1" fill="#c0c0c0"/><rect x="80" y="296" width="1" height="1" fill="#c0c0c0"/><rect x="90" y="296" width="1" height="1" fill="#c0c0c0"/><rect x="110" y="296" width="1" height="1" fill="#c0c0c0"/><rect x="120" y="296" width="1" height="1" fill="#c0c0c0"/><rect x="130" y="296" width="1" height="1" fill="#c0c0c0"/><rect x="140" y="296" width="1" height="1" fill="#c0c0c0"/><rect x="160" y="296" width="1" height="1" fill="#c0c0c0"/><rect x="170" y="296" width="1" height="1" fill="#c0c0c0"/><rect x="180" y="296" width="1" height="1" fill="#c0c0c0"/><rect x="190" y="296" width="1" height="1" fill="#c0c0c0"/><rect x="210" y="296" width="1" height="1" fill="#c0c0c0"/><rect x="220" y="296" width="1" height="1" fill="#c0c0c0"/><rect x="230" y="296" width="1" height="1" fill="#c0c0c0"/><rect x="240" y="296" width="1" height="1" fill="#c0c0c0"/><rect x="260" y="296" width="1" height="1" fill="#c0c0c0"/><rect x="270" y="296" width="1" height="1" fill="#c0c0c0"/><rect x="280" y="296" width="1" height="1" fill="#c0c0c0"/><rect x="290" y="296" width="1" height="1" fill="#c0c0c0"/><rect x="310" y="296" width="1" height="1" fill="#c0c0c0"/><rect x="320" y="296" width="1" height="1" fill="#c0c0c0"/><rect x="330" y="296" width="1" height="1" fill="#c0c0c0"/><rect x="340" y="296" width="1" height="1" fill="#c0c0c0"/><rect x="360" y="296" width="1" height="1" fill="#c0c0c0"/><rect x="370" y="296" width="1" height="1" fill="#c0c0c0"/><rect x="380" y="296" width="1" height="1" fill="#c0c0c0"/><rect x="390" y="296" width="1" height="1" fill="#c0c0c0"/><rect x="410" y="296" width="1" height="1" fill="#c0c0c0"/><rect x="420" y="296" width="1" height="1" fill="#c0c0c0"/><rect x="430" y="296" width="1" height="1" fill="#c0c0c0"/><rect x="440" y="296" width="1" height="1" fill="#c0c0c0"/><rect x="460" y="296" width="1" height="1" fill="#c0c0c0"/><rect x="470" y="296" width="1" height="1" fill="#c0c0c0"/><rect x="480" y="296" width="1" height="1" fill="#c0c0c0"/><rect x="490" y="296" width="1" height="1" fill="#c0c0c0"/><rect x="10" y="333" width="1" height="1" fill="#c0c0c0"/><rect x="20" y="333" width="1" height="1" fill="#c0c0c0"/><rect x="30" y="333" width="1" height="1" fill="#c0c0c0"/><rect x="40" y="333" width="1" height="1" fill="#c0c0c0"/><rect x="60" y="333" width="1" height="1" fill="#c0c0c0"/><rect x="70" y="333" width="1" height="1" fill="#c0c0c0"/><rect x="80" y="333" width="1" height="1" fill="#c0c0c0"/><rect x="90" y="333" width="1" height="1" fill="#c0c0c0"/><rect x="110" y="333" width="1" height="1" fill="#c0c0c0"/><rect x="120" y="333" width="1" height="1" fill="#c0c0c0"/><rect x="130" y="333" width="1" height="1" fill="#c0c0c0"/><rect x="140" y="333" width="1" height="1" fill="#c0c0c0"/><rect x="160" y="333" width="1" height="1" fill="#c0c0c0"/><rect x="170" y="333" width="1" height="1" fill="#c0c0c0"/><rect x="180" y="333" width="1" height="1" fill="#c0c0c0"/><rect x="190" y="333" width="1" height="1" fill="#c0c0c0"/><rect x="210" y="333" width="1" height="1" fill="#c0c0c0"/><rect x="220" y="333" width="1" height="1" fill="#c0c0c0"/><rect x="230" y="333" width="1" height="1" fill="#c0c0c0"/><rect x="240" y="333" width="1" height="1" fill="#c0c0c0"/><rect x="260" y="333" width="1" height="1" fill="#c0c0c0"/><rect x="270" y="333" width="1" height="1" fill="#c0c0c0"/><rect x="280" y="333" width="1" height="1" fill="#c0c0c0"/><rect x="290" y="333" width="1" height="1" fill="#c0c0c0"/><rect x="310" y="333" width="1" height="1" fill="#c0c0c0"/><rect x="320" y="333" width="1" height="1" fill="#c0c0c0"/><rect x="330" y="333" width="1" height="1" fill="#c0c0c0"/><rect x="340" y="333" width="1" height="1" fill="#c0c0c0"/><rect x="360" y="333" width="1" height="1" fill="#c0c0c0"/><rect x="370" y="333" width="1" height="1" fill="#c0c0c0"/><rect x="380" y="333" width="1" height="1" fill="#c0c0c0"/><rect x="390" y="333" width="1" height="1" fill="#c0c0c0"/><rect x="410" y="333" width="1" height="1" fill="#c0c0c0"/><rect x="420" y="333" width="1" height="1" fill="#c0c0c0"/><rect x="430" y="333" width="1" height="1" fill="#c0c0c0"/><rect x="440" y="333" width="1" height="1" fill="#c0c0c0"/><rect x="460" y="333" width="1" height="1" fill="#c0c0c0"/><rect x="470" y="333" width="1" height="1" fill="#c0c0c0"/><rect x="480" y="333" width="1" height="1" fill="#c0c0c0"/><rect x="490" y="333" width="1" height="1" fill="#c0c0c0"/><rect x="50" y="8" width="1" height="1" fill="#c0c0c0"/><rect x="50" y="15" width="1" height="1" fill="#c0c0c0"/><rect x="50" y="22" width="1" height="1" fill="#c0c0c0"/><rect x="50" y="29" width="1" height="1" fill="#c0c0c0"/><rect x="50" y="37" width="1" height="1" fill="#c0c0c0"/><rect x="50" y="45" width="1" height="1" fill="#c0c0c0"/><rect x="50" y="52" width="1" height="1" fill="#c0c0c0"/><rect x="50" y="59" width="1" height="1" fill="#c0c0c0"/><rect x="50" y="66" width="1" height="1" fill="#c0c0c0"/><rect x="50" y="74" width="1" height="1" fill="#c0c0c0"/><rect x="50" y="82" width="1" height="1" fill="#c0c0c0"/><rect x="50" y="89" width="1" height="1" fill="#c0c0c0"/><rect x="50" y="96" width="1" height="1" fill="#c0c0c0"/><rect x="50" y="103" width="1" height="1" fill="#c0c0c0"/><rect x="50" y="111" width="1" height="1" fill="#c0c0c0"/><rect x="50" y="119" width="1" height="1" fill="#c0c0c0"/><rect x="50" y="126" width="1" height="1" fill="#c0c0c0"/><rect x="50" y="133" width="1" height="1" fill="#c0c0c0"/><rect x="50" y="140" width="1" height="1" fill="#c0c0c0"/><rect x="50" y="148" width="1" height="1" fill="#c0c0c0"/><rect x="50" y="156" width="1" height="1" fill="#c0c0c0"/><rect x="50" y="163" width="1" height="1" fill="#c0c0c0"/><rect x="50" y="170" width="1" height="1" fill="#c0c0c0"/><rect x="50" y="177" width="1" height="1" fill="#c0c0c0"/><rect x="50" y="185" width="1" height="1" fill="#c0c0c0"/><rect x="50" y="193" width="1" height="1" fill="#c0c0c0"/><rect x="50" y="200" width="1" height="1" fill="#c0c0c0"/><rect x="50" y="207" width="1" height="1" fill="#c0c0c0"/><rect x="50" y="214" width="1" height="1" fill="#c0c0c0"/><rect x="50" y="222" width="1" height="1" fill="#c0c0c0"/><rect x="50" y="230" width="1" height="1" fill="#c0c0c0"/><rect x="50" y="237" width="1" height="1" fill="#c0c0c0"/><rect x="50" y="244" width="1" height="1" fill="#c0c0c0"/><rect x="50" y="251" width="1" height="1" fill="#c0c0c0"/><rect x="50" y="259" width="1" height="1" fill="#c0c0c0"/><rect x="50" y="267" width="1" height="1" fill="#c0c0c0"/><rect x="50" y="274" width="1" height="1" fill="#c0c0c0"/><rect x="50" y="281" width="1" height="1" fill="#c0c0c0"/><rect x="50" y="288" width="1" height="1" fill="#c0c0c0"/><rect x="50" y="296" width="1" height="1" fill="#c0c0c0"/><rect x="50" y="304" width="1" height="1" fill="#c0c0c0"/><rect x="50" y="311" width="1" height="1" fill="#c0c0c0"/><rect x="50" y="318" width="1" height="1" fill="#c0c0c0"/><rect x="50" y="325" width="1" height="1" fill="#c0c0c0"/><rect x="50" y="333" width="1" height="1" fill="#c0c0c0"/><rect x="50" y="341" width="1" height="1" fill="#c0c0c0"/><rect x="50" y="348" width="1" height="1" fill="#c0c0c0"/><rect x="50" y="355" width="1" height="1" fill="#c0c0c0"/><rect x="50" y="362" width="1" height="1" fill="#c0c0c0"/><rect x="100" y="8" width="1" height="1" fill="#c0c0c0"/><rect x="100" y="15" width="1" height="1" fill="#c0c0c0"/><rect x="100" y="22" width="1" height="1" fill="#c0c0c0"/><rect x="100" y="29" width="1" height="1" fill="#c0c0c0"/><rect x="100" y="37" width="1" height="1" fill="#c0c0c0"/><rect x="100" y="45" width="1" height="1" fill="#c0c0c0"/><rect x="100" y="52" width="1" height="1" fill="#c0c0c0"/><rect x="100" y="59" width="1" height="1" fill="#c0c0c0"/><rect x="100" y="66" width="1" height="1" fill="#c0c0c0"/><rect x="100" y="74" width="1" height="1" fill="#c0c0c0"/><rect x="100" y="82" width="1" height="1" fill="#c0c0c0"/><rect x="100" y="89" width="1" height="1" fill="#c0c0c0"/><rect x="100" y="96" width="1" height="1" fill="#c0c0c0"/><rect x="100" y="103" width="1" height="1" fill="#c0c0c0"/><rect x="100" y="111" width="1" height="1" fill="#c0c0c0"/><rect x="100" y="119" width="1" height="1" fill="#c0c0c0"/><rect x="100" y="126" width="1" height="1" fill="#c0c0c0"/><rect x="100" y="133" width="1" height="1" fill="#c0c0c0"/><rect x="100" y="140" width="1" height="1" fill="#c0c0c0"/><rect x="100" y="148" width="1" height="1" fill="#c0c0c0"/><rect x="100" y="156" width="1" height="1" fill="#c0c0c0"/><rect x="100" y="163" width="1" height="1" fill="#c0c0c0"/><rect x="100" y="170" width="1" height="1" fill="#c0c0c0"/><rect x="100" y="177" width="1" height="1" fill="#c0c0c0"/><rect x="100" y="185" width="1" height="1" fill="#c0c0c0"/><rect x="100" y="193" width="1" height="1" fill="#c0c0c0"/><rect x="100" y="200" width="1" height="1" fill="#c0c0c0"/><rect x="100" y="207" width="1" height="1" fill="#c0c0c0"/><rect x="100" y="214" width="1" height="1" fill="#c0c0c0"/><rect x="100" y="222" width="1" height="1" fill="#c0c0c0"/><rect x="100" y="230" width="1" height="1" fill="#c0c0c0"/><rect x="100" y="237" width="1" height="1" fill="#c0c0c0"/><rect x="100" y="244" width="1" height="1" fill="#c0c0c0"/><rect x="100" y="251" width="1" height="1" fill="#c0c0c0"/><rect x="100" y="259" width="1" height="1" fill="#c0c0c0"/><rect x="100" y="267" width="1" height="1" fill="#c0c0c0"/><rect x="100" y="274" width="1" height="1" fill="#c0c0c0"/><rect x="100" y="281" width="1" height="1" fill="#c0c0c0"/><rect x="100" y="288" width="1" height="1" fill="#c0c0c0"/><rect x="100" y="296" width="1" height="1" fill="#c0c0c0"/><rect x="100" y="304" width="1" height="1" fill="#c0c0c0"/><rect x="100" y="311" width="1" height="1" fill="#c0c0c0"/><rect x="100" y="318" width="1" height="1" fill="#c0c0c0"/><rect x="100" y="325" width="1" height="1" fill="#c0c0c0"/><rect x="100" y="333" width="1" height="1" fill="#c0c0c0"/><rect x="100" y="341" width="1" height="1" fill="#c0c0c0"/><rect x="100" y="348" width="1" height="1" fill="#c0c0c0"/><rect x="100" y="355" width="1" height="1" fill="#c0c0c0"/><rect x="100" y="362" width="1" height="1" fill="#c0c0c0"/><rect x="150" y="8" width="1" height="1" fill="#c0c0c0"/><rect x="150" y="15" width="1" height="1" fill="#c0c0c0"/><rect x="150" y="22" width="1" height="1" fill="#c0c0c0"/><rect x="150" y="29" width="1" height="1" fill="#c0c0c0"/><rect x="150" y="37" width="1" height="1" fill="#c0c0c0"/><rect x="150" y="45" width="1" height="1" fill="#c0c0c0"/><rect x="150" y="52" width="1" height="1" fill="#c0c0c0"/><rect x="150" y="59" width="1" height="1" fill="#c0c0c0"/><rect x="150" y="66" width="1" height="1" fill="#c0c0c0"/><rect x="150" y="74" width="1" height="1" fill="#c0c0c0"/><rect x="150" y="82" width="1" height="1" fill="#c0c0c0"/><rect x="150" y="89" width="1" height="1" fill="#c0c0c0"/><rect x="150" y="96" width="1" height="1" fill="#c0c0c0"/><rect x="150" y="103" width="1" height="1" fill="#c0c0c0"/><rect x="150" y="111" width="1" height="1" fill="#c0c0c0"/><rect x="150" y="119" width="1" height="1" fill="#c0c0c0"/><rect x="150" y="126" width="1" height="1" fill="#c0c0c0"/><rect x="150" y="133" width="1" height="1" fill="#c0c0c0"/><rect x="150" y="140" width="1" height="1" fill="#c0c0c0"/><rect x="150" y="148" width="1" height="1" fill="#c0c0c0"/><rect x="150" y="156" width="1" height="1" fill="#c0c0c0"/><rect x="150" y="163" width="1" height="1" fill="#c0c0c0"/><rect x="150" y="170" width="1" height="1" fill="#c0c0c0"/><rect x="150" y="177" width="1" height="1" fill="#c0c0c0"/><rect x="150" y="185" width="1" height="1" fill="#c0c0c0"/><rect x="150" y="193" width="1" height="1" fill="#c0c0c0"/><rect x="150" y="200" width="1" height="1" fill="#c0c0c0"/><rect x="150" y="207" width="1" height="1" fill="#c0c0c0"/><rect x="150" y="214" width="1" height="1" fill="#c0c0c0"/><rect x="150" y="222" width="1" height="1" fill="#c0c0c0"/><rect x="150" y="230" width="1" height="1" fill="#c0c0c0"/><rect x="150" y="237" width="1" height="1" fill="#c0c0c0"/><rect x="150" y="244" width="1" height="1" fill="#c0c0c0"/><rect x="150" y="251" width="1" height="1" fill="#c0c0c0"/><rect x="150" y="259" width="1" height="1" fill="#c0c0c0"/><rect x="150" y="267" width="1" height="1" fill="#c0c0c0"/><rect x="150" y="274" width="1" height="1" fill="#c0c0c0"/><rect x="150" y="281" width="1" height="1" fill="#c0c0c0"/><rect x="150" y="288" width="1" height="1" fill="#c0c0c0"/><rect x="150" y="296" width="1" height="1" fill="#c0c0c0"/><rect x="150" y="304" width="1" height="1" fill="#c0c0c0"/><rect x="150" y="311" width="1" height="1" fill="#c0c0c0"/><rect x="150" y="318" width="1" height="1" fill="#c0c0c0"/><rect x="150" y="325" width="1" height="1" fill="#c0c0c0"/><rect x="150" y="333" width="1" height="1" fill="#c0c0c0"/><rect x="150" y="341" width="1" height="1" fill="#c0c0c0"/><rect x="150" y="348" width="1" height="1" fill="#c0c0c0"/><rect x="150" y="355" width="1" height="1" fill="#c0c0c0"/><rect x="150" y="362" width="1" height="1" fill="#c0c0c0"/><rect x="200" y="8" width="1" height="1" fill="#c0c0c0"/><rect x="200" y="15" width="1" height="1" fill="#c0c0c0"/><rect x="200" y="22" width="1" height="1" fill="#c0c0c0"/><rect x="200" y="29" width="1" height="1" fill="#c0c0c0"/><rect x="200" y="37" width="1" height="1" fill="#c0c0c0"/><rect x="200" y="45" width="1" height="1" fill="#c0c0c0"/><rect x="200" y="52" width="1" height="1" fill="#c0c0c0"/><rect x="200" y="59" width="1" height="1" fill="#c0c0c0"/><rect x="200" y="66" width="1" height="1" fill="#c0c0c0"/><rect x="200" y="74" width="1" height="1" fill="#c0c0c0"/><rect x="200" y="82" width="1" height="1" fill="#c0c0c0"/><rect x="200" y="89" width="1" height="1" fill="#c0c0c0"/><rect x="200" y="96" width="1" height="1" fill="#c0c0c0"/><rect x="200" y="103" width="1" height="1" fill="#c0c0c0"/><rect x="200" y="111" width="1" height="1" fill="#c0c0c0"/><rect x="200" y="119" width="1" height="1" fill="#c0c0c0"/><rect x="200" y="126" width="1" height="1" fill="#c0c0c0"/><rect x="200" y="133" width="1" height="1" fill="#c0c0c0"/><rect x="200" y="140" width="1" height="1" fill="#c0c0c0"/><rect x="200" y="148" width="1" height="1" fill="#c0c0c0"/><rect x="200" y="156" width="1" height="1" fill="#c0c0c0"/><rect x="200" y="163" width="1" height="1" fill="#c0c0c0"/><rect x="200" y="170" width="1" height="1" fill="#c0c0c0"/><rect x="200" y="177" width="1" height="1" fill="#c0c0c0"/><rect x="200" y="185" width="1" height="1" fill="#c0c0c0"/><rect x="200" y="193" width="1" height="1" fill="#c0c0c0"/><rect x="200" y="200" width="1" height="1" fill="#c0c0c0"/><rect x="200" y="207" width="1" height="1" fill="#c0c0c0"/><rect x="200" y="214" width="1" height="1" fill="#c0c0c0"/><rect x="200" y="222" width="1" height="1" fill="#c0c0c0"/><rect x="200" y="230" width="1" height="1" fill="#c0c0c0"/><rect x="200" y="237" width="1" height="1" fill="#c0c0c0"/><rect x="200" y="244" width="1" height="1" fill="#c0c0c0"/><rect x="200" y="251" width="1" height="1" fill="#c0c0c0"/><rect x="200" y="259" width="1" height="1" fill="#c0c0c0"/><rect x="200" y="267" width="1" height="1" fill="#c0c0c0"/><rect x="200" y="274" width="1" height="1" fill="#c0c0c0"/><rect x="200" y="281" width="1" height="1" fill="#c0c0c0"/><rect x="200" y="288" width="1" height="1" fill="#c0c0c0"/><rect x="200" y="296" width="1" height="1" fill="#c0c0c0"/><rect x="200" y="304" width="1" height="1" fill="#c0c0c0"/><rect x="200" y="311" width="1" height="1" fill="#c0c0c0"/><rect x="200" y="318" width="1" height="1" fill="#c0c0c0"/><rect x="200" y="325" width="1" height="1" fill="#c0c0c0"/><rect x="200" y="333" width="1" height="1" fill="#c0c0c0"/><rect x="200" y="341" width="1" height="1" fill="#c0c0c0"/><rect x="200" y="348" width="1" height="1" fill="#c0c0c0"/><rect x="200" y="355" width="1" height="1" fill="#c0c0c0"/><rect x="200" y="362" width="1" height="1" fill="#c0c0c0"/><rect x="250" y="0" width="1" height="371" fill="#c0c0c0"/><rect x="249" y="8" width="3" height="1" fill="#c0c0c0"/><rect x="249" y="15" width="3" height="1" fill="#c0c0c0"/><rect x="249" y="22" width="3" height="1" fill="#c0c0c0"/><rect x="249" y="29" width="3" height="1" fill="#c0c0c0"/><rect x="249" y="45" width="3" height="1" fill="#c0c0c0"/><rect x="249" y="52" width="3" height="1" fill="#c0c0c0"/><rect x="249" y="59" width="3" height="1" fill="#c0c0c0"/><rect x="249" y="66" width="3" height="1" fill="#c0c0c0"/><rect x="249" y="37" width="3" height="1" fill="#c0c0c0"/><rect x="249" y="82" width="3" height="1" fill="#c0c0c0"/><rect x="249" y="89" width="3" height="1" fill="#c0c0c0"/><rect x="249" y="96" width="3" height="1" fill="#c0c0c0"/><rect x="249" y="103" width="3" height="1" fill="#c0c0c0"/><rect x="249" y="74" width="3" height="1" fill="#c0c0c0"/><rect x="249" y="119" width="3" height="1" fill="#c0c0c0"/><rect x="249" y="126" width="3" height="1" fill="#c0c0c0"/><rect x="249" y="133" width="3" height="1" fill="#c0c0c0"/><rect x="249" y="140" width="3" height="1" fill="#c0c0c0"/><rect x="249" y="111" width="3" height="1" fill="#c0c0c0"/><rect x="249" y="156" width="3" height="1" fill="#c0c0c0"/><rect x="249" y="163" width="3" height="1" fill="#c0c0c0"/><rect x="249" y="170" width="3" height="1" fill="#c0c0c0"/><rect x="249" y="177" width="3" height="1" fill="#c0c0c0"/><rect x="249" y="148" width="3" height="1" fill="#c0c0c0"/><rect x="249" y="193" width="3" height="1" fill="#c0c0c0"/><rect x="249" y="200" width="3" height="1" fill="#c0c0c0"/><rect x="249" y="207" width="3" height="1" fill="#c0c0c0"/><rect x="249" y="214" width="3" height="1" fill="#c0c0c0"/><rect x="249" y="185" width="3" height="1" fill="#c0c0c0"/><rect x="249" y="230" width="3" height="1" fill="#c0c0c0"/><rect x="249" y="237" width="3" height="1" fill="#c0c0c0"/><rect x="249" y="244" width="3" height="1" fill="#c0c0c0"/><rect x="249" y="251" width="3" height="1" fill="#c0c0c0"/><rect x="249" y="222" width="3" height="1" fill="#c0c0c0"/><rect x="249" y="267" width="3" height="1" fill="#c0c0c0"/><rect x="249" y="274" width="3" height="1" fill="#c0c0c0"/><rect x="249" y="281" width="3" height="1" fill="#c0c0c0"/><rect x="249" y="288" width="3" height="1" fill="#c0c0c0"/><rect x="249" y="259" width="3" height="1" fill="#c0c0c0"/><rect x="249" y="304" width="3" height="1" fill="#c0c0c0"/><rect x="249" y="311" width="3" height="1" fill="#c0c0c0"/><rect x="249" y="318" width="3" height="1" fill="#c0c0c0"/><rect x="249" y="325" width="3" height="1" fill="#c0c0c0"/><rect x="249" y="296" width="3" height="1" fill="#c0c0c0"/><rect x="249" y="341" width="3" height="1" fill="#c0c0c0"/><rect x="249" y="348" width="3" height="1" fill="#c0c0c0"/><rect x="249" y="355" width="3" height="1" fill="#c0c0c0"/><rect x="249" y="362" width="3" height="1" fill="#c0c0c0"/><rect x="249" y="333" width="3" height="1" fill="#c0c0c0"/><rect x="300" y="8" width="1" height="1" fill="#c0c0c0"/><rect x="300" y="15" width="1" height="1" fill="#c0c0c0"/><rect x="300" y="22" width="1" height="1" fill="#c0c0c0"/><rect x="300" y="29" width="1" height="1" fill="#c0c0c0"/><rect x="300" y="37" width="1" height="1" fill="#c0c0c0"/><rect x="300" y="45" width="1" height="1" fill="#c0c0c0"/><rect x="300" y="52" width="1" height="1" fill="#c0c0c0"/><rect x="300" y="59" width="1" height="1" fill="#c0c0c0"/><rect x="300" y="66" width="1" height="1" fill="#c0c0c0"/><rect x="300" y="74" width="1" height="1" fill="#c0c0c0"/><rect x="300" y="82" width="1" height="1" fill="#c0c0c0"/><rect x="300" y="89" width="1" height="1" fill="#c0c0c0"/><rect x="300" y="96" width="1" height="1" fill="#c0c0c0"/><rect x="300" y="103" width="1" height="1" fill="#c0c0c0"/><rect x="300" y="111" width="1" height="1" fill="#c0c0c0"/><rect x="300" y="119" width="1" height="1" fill="#c0c0c0"/><rect x="300" y="126" width="1" height="1" fill="#c0c0c0"/><rect x="300" y="133" width="1" height="1" fill="#c0c0c0"/><rect x="300" y="140" width="1" height="1" fill="#c0c0c0"/><rect x="300" y="148" width="1" height="1" fill="#c0c0c0"/><rect x="300" y="156" width="1" height="1" fill="#c0c0c0"/><rect x="300" y="163" width="1" height="1" fill="#c0c0c0"/><rect x="300" y="170" width="1" height="1" fill="#c0c0c0"/><rect x="300" y="177" width="1" height="1" fill="#c0c0c0"/><rect x="300" y="185" width="1" height="1" fill="#c0c0c0"/><rect x="300" y="193" width="1" height="1" fill="#c0c0c0"/><rect x="300" y="200" width="1" height="1" fill="#c0c0c0"/><rect x="300" y="207" width="1" height="1" fill="#c0c0c0"/><rect x="300" y="214" width="1" height="1" fill="#c0c0c0"/><rect x="300" y="222" width="1" height="1" fill="#c0c0c0"/><rect x="300" y="230" width="1" height="1" fill="#c0c0c0"/><rect x="300" y="237" width="1" height="1" fill="#c0c0c0"/><rect x="300" y="244" width="1" height="1" fill="#c0c0c0"/><rect x="300" y="251" width="1" height="1" fill="#c0c0c0"/><rect x="300" y="259" width="1" height="1" fill="#c0c0c0"/><rect x="300" y="267" width="1" height="1" fill="#c0c0c0"/><rect x="300" y="274" width="1" height="1" fill="#c0c0c0"/><rect x="300" y="281" width="1" height="1" fill="#c0c0c0"/><rect x="300" y="288" width="1" height="1" fill="#c0c0c0"/><rect x="300" y="296" width="1" height="1" fill="#c0c0c0"/><rect x="300" y="304" width="1" height="1" fill="#c0c0c0"/><rect x="300" y="311" width="1" height="1" fill="#c0c0c0"/><rect x="300" y="318" width="1" height="1" fill="#c0c0c0"/><rect x="300" y="325" width="1" height="1" fill="#c0c0c0"/><rect x="300" y="333" width="1" height="1" fill="#c0c0c0"/><rect x="300" y="341" width="1" height="1" fill="#c0c0c0"/><rect x="300" y="348" width="1" height="1" fill="#c0c0c0"/><rect x="300" y="355" width="1" height="1" fill="#c0c0c0"/><rect x="300" y="362" width="1" height="1" fill="#c0c0c0"/><rect x="350" y="8" width="1" height="1" fill="#c0c0c0"/><rect x="350" y="15" width="1" height="1" fill="#c0c0c0"/><rect x="350" y="22" width="1" height="1" fill="#c0c0c0"/><rect x="350" y="29" width="1" height="1" fill="#c0c0c0"/><rect x="350" y="37" width="1" height="1" fill="#c0c0c0"/><rect x="350" y="45" width="1" height="1" fill="#c0c0c0"/><rect x="350" y="52" width="1" height="1" fill="#c0c0c0"/><rect x="350" y="59" width="1" height="1" fill="#c0c0c0"/><rect x="350" y="66" width="1" height="1" fill="#c0c0c0"/><rect x="350" y="74" width="1" height="1" fill="#c0c0c0"/><rect x="350" y="82" width="1" height="1" fill="#c0c0c0"/><rect x="350" y="89" width="1" height="1" fill="#c0c0c0"/><rect x="350" y="96" width="1" height="1" fill="#c0c0c0"/><rect x="350" y="103" width="1" height="1" fill="#c0c0c0"/><rect x="350" y="111" width="1" height="1" fill="#c0c0c0"/><rect x="350" y="119" width="1" height="1" fill="#c0c0c0"/><rect x="350" y="126" width="1" height="1" fill="#c0c0c0"/><rect x="350" y="133" width="1" height="1" fill="#c0c0c0"/><rect x="350" y="140" width="1" height="1" fill="#c0c0c0"/><rect x="350" y="148" width="1" height="1" fill="#c0c0c0"/><rect x="350" y="156" width="1" height="1" fill="#c0c0c0"/><rect x="350" y="163" width="1" height="1" fill="#c0c0c0"/><rect x="350" y="170" width="1" height="1" fill="#c0c0c0"/><rect x="350" y="177" width="1" height="1" fill="#c0c0c0"/><rect x="350" y="185" width="1" height="1" fill="#c0c0c0"/><rect x="350" y="193" width="1" height="1" fill="#c0c0c0"/><rect x="350" y="200" width="1" height="1" fill="#c0c0c0"/><rect x="350" y="207" width="1" height="1" fill="#c0c0c0"/><rect x="350" y="214" width="1" height="1" fill="#c0c0c0"/><rect x="350" y="222" width="1" height="1" fill="#c0c0c0"/><rect x="350" y="230" width="1" height="1" fill="#c0c0c0"/><rect x="350" y="237" width="1" height="1" fill="#c0c0c0"/><rect x="350" y="244" width="1" height="1" fill="#c0c0c0"/><rect x="350" y="251" width="1" height="1" fill="#c0c0c0"/><rect x="350" y="259" width="1" height="1" fill="#c0c0c0"/><rect x="350" y="267" width="1" height="1" fill="#c0c0c0"/><rect x="350" y="274" width="1" height="1" fill="#c0c0c0"/><rect x="350" y="281" width="1" height="1" fill="#c0c0c0"/><rect x="350" y="288" width="1" height="1" fill="#c0c0c0"/><rect x="350" y="296" width="1" height="1" fill="#c0c0c0"/><rect x="350" y="304" width="1" height="1" fill="#c0c0c0"/><rect x="350" y="311" width="1" height="1" fill="#c0c0c0"/><rect x="350" y="318" width="1" height="1" fill="#c0c0c0"/><rect x="350" y="325" width="1" height="1" fill="#c0c0c0"/><rect x="350" y="333" width="1" height="1" fill="#c0c0c0"/><rect x="350" y="341" width="1" height="1" fill="#c0c0c0"/><rect x="350" y="348" width="1" height="1" fill="#c0c0c0"/><rect x="350" y="355" width="1" height="1" fill="#c0c0c0"/><rect x="350" y="362" width="1" height="1" fill="#c0c0c0"/><rect x="400" y="8" width="1" height="1" fill="#c0c0c0"/><rect x="400" y="15" width="1" height="1" fill="#c0c0c0"/><rect x="400" y="22" width="1" height="1" fill="#c0c0c0"/><rect x="400" y="29" width="1" height="1" fill="#c0c0c0"/><rect x="400" y="37" width="1" height="1" fill="#c0c0c0"/><rect x="400" y="45" width="1" height="1" fill="#c0c0c0"/><rect x="400" y="52" width="1" height="1" fill="#c0c0c0"/><rect x="400" y="59" width="1" height="1" fill="#c0c0c0"/><rect x="400" y="66" width="1" height="1" fill="#c0c0c0"/><rect x="400" y="74" width="1" height="1" fill="#c0c0c0"/><rect x="400" y="82" width="1" height="1" fill="#c0c0c0"/><rect x="400" y="89" width="1" height="1" fill="#c0c0c0"/><rect x="400" y="96" width="1" height="1" fill="#c0c0c0"/><rect x="400" y="103" width="1" height="1" fill="#c0c0c0"/><rect x="400" y="111" width="1" height="1" fill="#c0c0c0"/><rect x="400" y="119" width="1" height="1" fill="#c0c0c0"/><rect x="400" y="126" width="1" height="1" fill="#c0c0c0"/><rect x="400" y="133" width="1" height="1" fill="#c0c0c0"/><rect x="400" y="140" width="1" height="1" fill="#c0c0c0"/><rect x="400" y="148" width="1" height="1" fill="#c0c0c0"/><rect x="400" y="156" width="1" height="1" fill="#c0c0c0"/><rect x="400" y="163" width="1" height="1" fill="#c0c0c0"/><rect x="400" y="170" width="1" height="1" fill="#c0c0c0"/><rect x="400" y="177" width="1" height="1" fill="#c0c0c0"/><rect x="400" y="185" width="1" height="1" fill="#c0c0c0"/><rect x="400" y="193" width="1" height="1" fill="#c0c0c0"/><rect x="400" y="200" width="1" height="1" fill="#c0c0c0"/><rect x="400" y="207" width="1" height="1" fill="#c0c0c0"/><rect x="400" y="214" width="1" height="1" fill="#c0c0c0"/><rect x="400" y="222" width="1" height="1" fill="#c0c0c0"/><rect x="400" y="230" width="1" height="1" fill="#c0c0c0"/><rect x="400" y="237" width="1" height="1" fill="#c0c0c0"/><rect x="400" y="244" width="1" height="1" fill="#c0c0c0"/><rect x="400" y="251" width="1" height="1" fill="#c0c0c0"/><rect x="400" y="259" width="1" height="1" fill="#c0c0c0"/><rect x="400" y="267" width="1" height="1" fill="#c0c0c0"/><rect x="400" y="274" width="1" height="1" fill="#c0c0c0"/><rect x="400" y="281" width="1" height="1" fill="#c0c0c0"/><rect x="400" y="288" width="1" height="1" fill="#c0c0c0"/><rect x="400" y="296" width="1" height="1" fill="#c0c0c0"/><rect x="400" y="304" width="1" height="1" fill="#c0c0c0"/><rect x="400" y="311" width="1" height="1" fill="#c0c0c0"/><rect x="400" y="318" width="1" height="1" fill="#c0c0c0"/><rect x="400" y="325" width="1" height="1" fill="#c0c0c0"/><rect x="400" y="333" width="1" height="1" fill="#c0c0c0"/><rect x="400" y="341" width="1" height="1" fill="#c0c0c0"/><rect x="400" y="348" width="1" height="1" fill="#c0c0c0"/><rect x="400" y="355" width="1" height="1" fill="#c0c0c0"/><rect x="400" y="362" width="1" height="1" fill="#c0c0c0"/><rect x="450" y="8" width="1" height="1" fill="#c0c0c0"/><rect x="450" y="15" width="1" height="1" fill="#c0c0c0"/><rect x="450" y="22" width="1" height="1" fill="#c0c0c0"/><rect x="450" y="29" width="1" height="1" fill="#c0c0c0"/><rect x="450" y="37" width="1" height="1" fill="#c0c0c0"/><rect x="450" y="45" width="1" height="1" fill="#c0c0c0"/><rect x="450" y="52" width="1" height="1" fill="#c0c0c0"/><rect x="450" y="59" width="1" height="1" fill="#c0c0c0"/><rect x="450" y="66" width="1" height="1" fill="#c0c0c0"/><rect x="450" y="74" width="1" height="1" fill="#c0c0c0"/><rect x="450" y="82" width="1" height="1" fill="#c0c0c0"/><rect x="450" y="89" width="1" height="1" fill="#c0c0c0"/><rect x="450" y="96" width="1" height="1" fill="#c0c0c0"/><rect x="450" y="103" width="1" height="1" fill="#c0c0c0"/><rect x="450" y="111" width="1" height="1" fill="#c0c0c0"/><rect x="450" y="119" width="1" height="1" fill="#c0c0c0"/><rect x="450" y="126" width="1" height="1" fill="#c0c0c0"/><rect x="450" y="133" width="1" height="1" fill="#c0c0c0"/><rect x="450" y="140" width="1" height="1" fill="#c0c0c0"/><rect x="450" y="148" width="1" height="1" fill="#c0c0c0"/><rect x="450" y="156" width="1" height="1" fill="#c0c0c0"/><rect x="450" y="163" width="1" height="1" fill="#c0c0c0"/><rect x="450" y="170" width="1" height="1" fill="#c0c0c0"/><rect x="450" y="177" width="1" height="1" fill="#c0c0c0"/><rect x="450" y="185" width="1" height="1" fill="#c0c0c0"/><rect x="450" y="193" width="1" height="1" fill="#c0c0c0"/><rect x="450" y="200" width="1" height="1" fill="#c0c0c0"/><rect x="450" y="207" width="1" height="1" fill="#c0c0c0"/><rect x="450" y="214" width="1" height="1" fill="#c0c0c0"/><rect x="450" y="222" width="1" height="1" fill="#c0c0c0"/><rect x="450" y="230" width="1" height="1" fill="#c0c0c0"/><rect x="450" y="237" width="1" height="1" fill="#c0c0c0"/><rect x="450" y="244" width="1" height="1" fill="#c0c0c0"/><rect x="450" y="251" width="1" height="1" fill="#c0c0c0"/><rect x="450" y="259" width="1" height="1" fill="#c0c0c0"/><rect x="450" y="267" width="1" height="1" fill="#c0c0c0"/><rect x="450" y="274" width="1" height="1" fill="#c0c0c0"/><rect x="450" y="281" width="1" height="1" fill="#c0c0c0"/><rect x="450" y="288" width="1" height="1" fill="#c0c0c0"/><rect x="450" y="296" width="1" height="1" fill="#c0c0c0"/><rect x="450" y="304" width="1" height="1" fill="#c0c0c0"/><rect x="450" y="311" width="1" height="1" fill="#c0c0c0"/><rect x="450" y="318" width="1" height="1" fill="#c0c0c0"/><rect x="450" y="325" width="1" height="1" fill="#c0c0c0"/><rect x="450" y="333" width="1" height="1" fill="#c0c0c0"/><rect x="450" y="341" width="1" height="1" fill="#c0c0c0"/><rect x="450" y="348" width="1" height="1" fill="#c0c0c0"/><rect x="450" y="355" width="1" height="1" fill="#c0c0c0"/><rect x="450" y="362" width="1" height="1" fill="#c0c0c0"/><rect x="50" y="37" width="1" height="1" fill="#c0c0c0"/><rect x="50" y="74" width="1" height="1" fill="#c0c0c0"/><rect x="50" y="111" width="1" height="1" fill="#c0c0c0"/><rect x="50" y="148" width="1" height="1" fill="#c0c0c0"/><rect x="50" y="185" width="1" height="1" fill="#c0c0c0"/><rect x="50" y="222" width="1" height="1" fill="#c0c0c0"/><rect x="50" y="259" width="1" height="1" fill="#c0c0c0"/><rect x="50" y="296" width="1" height="1" fill="#c0c0c0"/><rect x="50" y="333" width="1" height="1" fill="#c0c0c0"/><rect x="100" y="37" width="1" height="1" fill="#c0c0c0"/><rect x="100" y="74" width="1" height="1" fill="#c0c0c0"/><rect x="100" y="111" width="1" height="1" fill="#c0c0c0"/><rect x="100" y="148" width="1" height="1" fill="#c0c0c0"/><rect x="100" y="185" width="1" height="1" fill="#c0c0c0"/><rect x="100" y="222" width="1" height="1" fill="#c0c0c0"/><rect x="100" y="259" width="1" height="1" fill="#c0c0c0"/><rect x="100" y="296" width="1" height="1" fill="#c0c0c0"/><rect x="100" y="333" width="1" height="1" fill="#c0c0c0"/><rect x="150" y="37" width="1" height="1" fill="#c0c0c0"/><rect x="150" y="74" width="1" height="1" fill="#c0c0c0"/><rect x="150" y="111" width="1" height="1" fill="#c0c0c0"/><rect x="150" y="148" width="1" height="1" fill="#c0c0c0"/><rect x="150" y="185" width="1" height="1" fill="#c0c0c0"/><rect x="150" y="222" width="1" height="1" fill="#c0c0c0"/><rect x="150" y="259" width="1" height="1" fill="#c0c0c0"/><rect x="150" y="296" width="1" height="1" fill="#c0c0c0"/><rect x="150" y="333" width="1" height="1" fill="#c0c0c0"/><rect x="200" y="37" width="1" height="1" fill="#c0c0c0"/><rect x="200" y="74" width="1" height="1" fill="#c0c0c0"/><rect x="200" y="111" width="1" height="1" fill="#c0c0c0"/><rect x="200" y="148" width="1" height="1" fill="#c0c0c0"/><rect x="200" y="185" width="1" height="1" fill="#c0c0c0"/><rect x="200" y="222" width="1" height="1" fill="#c0c0c0"/><rect x="200" y="259" width="1" height="1" fill="#c0c0c0"/><rect x="200" y="296" width="1" height="1" fill="#c0c0c0"/><rect x="200" y="333" width="1" height="1" fill="#c0c0c0"/><rect x="250" y="37" width="1" height="1" fill="#c0c0c0"/><rect x="250" y="74" width="1" height="1" fill="#c0c0c0"/><rect x="250" y="111" width="1" height="1" fill="#c0c0c0"/><rect x="250" y="148" width="1" height="1" fill="#c0c0c0"/><rect x="250" y="185" width="1" height="1" fill="#c0c0c0"/><rect x="250" y="222" width="1" height="1" fill="#c0c0c0"/><rect x="250" y="259" width="1" height="1" fill="#c0c0c0"/><rect x="250" y="296" width="1" height="1" fill="#c0c0c0"/><rect x="250" y="333" width="1" height="1" fill="#c0c0c0"/><rect x="300" y="37" width="1" height="1" fill="#c0c0c0"/><rect x="300" y="74" width="1" height="1" fill="#c0c0c0"/><rect x="300" y="111" width="1" height="1" fill="#c0c0c0"/><rect x="300" y="148" width="1" height="1" fill="#c0c0c0"/><rect x="300" y="185" width="1" height="1" fill="#c0c0c0"/><rect x="300" y="222" width="1" height="1" fill="#c0c0c0"/><rect x="300" y="259" width="1" height="1" fill="#c0c0c0"/><rect x="300" y="296" width="1" height="1" fill="#c0c0c0"/><rect x="300" y="333" width="1" height="1" fill="#c0c0c0"/><rect x="350" y="37" width="1" height="1" fill="#c0c0c0"/><rect x="350" y="74" width="1" height="1" fill="#c0c0c0"/><rect x="350" y="111" width="1" height="1" fill="#c0c0c0"/><rect x="350" y="148" width="1" height="1" fill="#c0c0c0"/><rect x="350" y="185" width="1" height="1" fill="#c0c0c0"/><rect x="350" y="222" width="1" height="1" fill="#c0c0c0"/><rect x="350" y="259" width="1" height="1" fill="#c0c0c0"/><rect x="350" y="296" width="1" height="1" fill="#c0c0c0"/><rect x="350" y="333" width="1" height="1" fill="#c0c0c0"/><rect x="400" y="37" width="1" height="1" fill="#c0c0c0"/><rect x="400" y="74" width="1" height="1" fill="#c0c0c0"/><rect x="400" y="111" width="1" height="1" fill="#c0c0c0"/><rect x="400" y="148" width="1" height="1" fill="#c0c0c0"/><rect x="400" y="185" width="1" height="1" fill="#c0c0c0"/><rect x="400" y="222" width="1" height="1" fill="#c0c0c0"/><rect x="400" y="259" width="1" height="1" fill="#c0c0c0"/><rect x="400" y="296" width="1" height="1" fill="#c0c0c0"/><rect x="400" y="333" width="1" height="1" fill="#c0c0c0"/><rect x="450" y="37" width="1" height="1" fill="#c0c0c0"/><rect x="450" y="74" width="1" height="1" fill="#c0c0c0"/><rect x="450" y="111" width="1" height="1" fill="#c0c0c0"/><rect x="450" y="148" width="1" height="1" fill="#c0c0c0"/><rect x="450" y="185" width="1" height="1" fill="#c0c0c0"/><rect x="450" y="222" width="1" height="1" fill="#c0c0c0"/><rect x="450" y="259" width="1" height="1" fill="#c0c0c0"/><rect x="450" y="296" width="1" height="1" fill="#c0c0c0"/><rect x="450" y="333" width="1" height="1" fill="#c0c0c0"/><rect x="14" y="332" width="1" height="1" fill="#00ff00"/><rect x="15" y="331" width="1" height="1" fill="#00ff00"/><rect x="16" y="332" width="1" height="1" fill="#00ff00"/><rect x="17" y="333" width="1" height="1" fill="#00ff00"/><rect x="18" y="332" width="1" height="1" fill="#00ff00"/><rect x="19" y="332" width="1" height="1" fill="#00ff00"/><rect x="20" y="333" width="1" height="1" fill="#00ff00"/><rect x="21" y="332" width="1" height="1" fill="#00ff00"/><rect x="22" y="333" width="1" height="1" fill="#00ff00"/><rect x="23" y="332" width="1" height="1" fill="#00ff00"/><rect x="24" y="333" width="1" height="1" fill="#00ff00"/><rect x="25" y="333" width="1" height="1" fill="#00ff00"/><rect x="26" y="332" width="1" height="1" fill="#00ff00"/><rect x="27" y="332" width="1" height="1" fill="#00ff00"/><rect x="28" y="333" width="1" height="1" fill="#00ff00"/><rect x="29" y="332" width="1" height="1" fill="#00ff00"/><rect x="30" y="332" width="1" height="1" fill="#00ff00"/><rect x="31" y="332" width="1" height="1" fill="#00ff00"/><rect x="32" y="332" width="1" height="1" fill="#00ff00"/><rect x="33" y="332" width="1" height="1" fill="#00ff00"/><rect x="34" y="332" width="1" height="1" fill="#00ff00"/><rect x="35" y="333" width="1" height="1" fill="#00ff00"/><rect x="36" y="332" width="1" height="1" fill="#00ff00"/><rect x="37" y="332" width="1" height="1" fill="#00ff00"/><rect x="38" y="333" width="1" height="1" fill="#00ff00"/><rect x="39" y="333" width="1" height="1" fill="#00ff00"/><rect x="40" y="332" width="1" height="1" fill="#00ff00"/><rect x="41" y="332" width="1" height="1" fill="#00ff00"/><rect x="42" y="331" width="1" height="1" fill="#00ff00"/><rect x="43" y="332" width="1" height="1" fill="#00ff00"/><rect x="44" y="332" width="1" height="1" fill="#00ff00"/><rect x="45" y="332" width="1" height="1" fill="#00ff00"/><rect x="46" y="332" width="1" height="1" fill="#00ff00"/><rect x="47" y="333" width="1" height="1" fill="#00ff00"/><rect x="48" y="333" width="1" height="1" fill="#00ff00"/><rect x="49" y="331" width="1" height="1" fill="#00ff00"/><rect x="50" y="332" width="1" height="1" fill="#00ff00"/><rect x="51" y="332" width="1" height="1" fill="#00ff00"/><rect x="52" y="332" width="1" height="1" fill="#00ff00"/><rect x="53" y="332" width="1" height="1" fill="#00ff00"/><rect x="54" y="332" width="1" height="1" fill="#00ff00"/><rect x="55" y="332" width="1" height="1" fill="#00ff00"/><rect x="56" y="332" width="1" height="1" fill="#00ff00"/><rect x="57" y="332" width="1" height="1" fill="#00ff00"/><rect x="58" y="332" width="1" height="1" fill="#00ff00"/><rect x="59" y="332" width="1" height="1" fill="#00ff00"/><rect x="60" y="332" width="1" height="1" fill="#00ff00"/><rect x="61" y="332" width="1" height="1" fill="#00ff00"/><rect x="62" y="332" width="1" height="1" fill="#00ff00"/><rect x="63" y="332" width="1" height="1" fill="#00ff00"/><rect x="64" y="332" width="1" height="1" fill="#00ff00"/><rect x="65" y="333" width="1" height="1" fill="#00ff00"/><rect x="66" y="332" width="1" height="1" fill="#00ff00"/><rect x="67" y="332" width="1" height="1" fill="#00ff00"/><rect x="68" y="331" width="1" height="1" fill="#00ff00"/><rect x="69" y="332" width="1" height="1" fill="#00ff00"/><rect x="70" y="333" width="1" height="1" fill="#00ff00"/><rect x="71" y="332" width="1" height="1" fill="#00ff00"/><rect x="72" y="332" width="1" height="1" fill="#00ff00"/><rect x="73" y="332" width="1" height="1" fill="#00ff00"/><rect x="74" y="332" width="1" height="1" fill="#00ff00"/><rect x="75" y="332" width="1" height="1" fill="#00ff00"/><rect x="76" y="332" width="1" height="1" fill="#00ff00"/><rect x="77" y="332" width="1" height="1" fill="#00ff00"/><rect x="78" y="332" width="1" height="1" fill="#00ff00"/><rect x="79" y="332" width="1" height="1" fill="#00ff00"/><rect x="80" y="332" width="1" height="1" fill="#00ff00"/><rect x="81" y="332" width="1" height="1" fill="#00ff00"/><rect x="82" y="332" width="1" height="1" fill="#00ff00"/><rect x="83" y="332" width="1" height="1" fill="#00ff00"/><rect x="84" y="333" width="1" height="1" fill="#00ff00"/><rect x="85" y="332" width="1" height="1" fill="#00ff00"/><rect x="86" y="332" width="1" height="1" fill="#00ff00"/><rect x="87" y="332" width="1" height="1" fill="#00ff00"/><rect x="88" y="332" width="1" height="1" fill="#00ff00"/><rect x="89" y="332" width="1" height="1" fill="#00ff00"/><rect x="90" y="332" width="1" height="1" fill="#00ff00"/><rect x="91" y="332" width="1" height="1" fill="#00ff00"/><rect x="92" y="333" width="1" height="1" fill="#00ff00"/><rect x="93" y="332" width="1" height="1" fill="#00ff00"/><rect x="94" y="331" width="1" height="1" fill="#00ff00"/><rect x="95" y="333" width="1" height="1" fill="#00ff00"/><rect x="96" y="333" width="1" height="1" fill="#00ff00"/><rect x="97" y="332" width="1" height="1" fill="#00ff00"/><rect x="98" y="333" width="1" height="1" fill="#00ff00"/><rect x="99" y="332" width="1" height="1" fill="#00ff00"/><rect x="100" y="332" width="1" height="1" fill="#00ff00"/><rect x="101" y="332" width="1" height="1" fill="#00ff00"/><rect x="102" y="333" width="1" height="1" fill="#00ff00"/><rect x="103" y="332" width="1" height="1" fill="#00ff00"/><rect x="104" y="332" width="1" height="1" fill="#00ff00"/><rect x="105" y="332" width="1" height="1" fill="#00ff00"/><rect x="106" y="332" width="1" height="1" fill="#00ff00"/><rect x="107" y="332" width="1" height="1" fill="#00ff00"/><rect x="108" y="332" width="1" height="1" fill="#00ff00"/><rect x="109" y="332" width="1" height="1" fill="#00ff00"/><rect x="110" y="332" width="1" height="1" fill="#00ff00"/><rect x="111" y="332" width="1" height="1" fill="#00ff00"/><rect x="112" y="332" width="1" height="1" fill="#00ff00"/><rect x="113" y="331" width="1" height="1" fill="#00ff00"/><rect x="114" y="331" width="1" height="1" fill="#00ff00"/><rect x="115" y="332" width="1" height="1" fill="#00ff00"/><rect x="116" y="332" width="1" height="1" fill="#00ff00"/><rect x="117" y="332" width="1" height="1" fill="#00ff00"/><rect x="118" y="332" width="1" height="1" fill="#00ff00"/><rect x="119" y="332" width="1" height="1" fill="#00ff00"/><rect x="120" y="333" width="1" height="1" fill="#00ff00"/><rect x="121" y="332" width="1" height="1" fill="#00ff00"/><rect x="122" y="332" width="1" height="1" fill="#00ff00"/><rect x="123" y="332" width="1" height="1" fill="#00ff00"/><rect x="124" y="332" width="1" height="1" fill="#00ff00"/><rect x="125" y="332" width="1" height="1" fill="#00ff00"/><rect x="126" y="332" width="1" height="1" fill="#00ff00"/><rect x="127" y="332" width="1" height="1" fill="#00ff00"/><rect x="128" y="332" width="1" height="1" fill="#00ff00"/><rect x="129" y="333" width="1" height="1" fill="#00ff00"/><rect x="130" y="332" width="1" height="1" fill="#00ff00"/><rect x="131" y="332" width="1" height="1" fill="#00ff00"/><rect x="132" y="332" width="1" height="1" fill="#00ff00"/><rect x="133" y="332" width="1" height="1" fill="#00ff00"/><rect x="134" y="332" width="1" height="1" fill="#00ff00"/><rect x="135" y="332" width="1" height="1" fill="#00ff00"/><rect x="136" y="333" width="1" height="1" fill="#00ff00"/><rect x="137" y="332" width="1" height="1" fill="#00ff00"/><rect x="138" y="333" width="1" height="1" fill="#00ff00"/><rect x="139" y="333" width="1" height="1" fill="#00ff00"/><rect x="140" y="332" width="1" height="1" fill="#00ff00"/><rect x="141" y="331" width="1" height="1" fill="#00ff00"/><rect x="142" y="328" width="1" height="1" fill="#00ff00"/><rect x="143" y="322" width="1" height="1" fill="#00ff00"/><rect x="144" y="308" width="1" height="1" fill="#00ff00"/><rect x="145" y="286" width="1" height="1" fill="#00ff00"/><rect x="146" y="258" width="1" height="1" fill="#00ff00"/><rect x="147" y="217" width="1" height="1" fill="#00ff00"/><rect x="148" y="178" width="1" height="1" fill="#00ff00"/><rect x="149" y="142" width="1" height="1" fill="#00ff00"/><rect x="150" y="107" width="1" height="1" fill="#00ff00"/><rect x="151" y="78" width="1" height="1" fill="#00ff00"/><rect x="152" y="64" width="1" height="1" fill="#00ff00"/><rect x="153" y="59" width="1" height="1" fill="#00ff00"/><rect x="154" y="55" width="1" height="1" fill="#00ff00"/><rect x="154" y="57" width="1" height="1" fill="#00ff00"/><rect x="155" y="57" width="1" height="1" fill="#00ff00"/><rect x="156" y="55" width="1" height="1" fill="#00ff00"/><rect x="157" y="57" width="1" height="1" fill="#00ff00"/><rect x="158" y="56" width="1" height="1" fill="#00ff00"/><rect x="159" y="55" width="1" height="1" fill="#00ff00"/><rect x="160" y="57" width="1" height="1" fill="#00ff00"/><rect x="161" y="57" width="1" height="1" fill="#00ff00"/><rect x="162" y="56" width="1" height="1" fill="#00ff00"/><rect x="163" y="56" width="1" height="1" fill="#00ff00"/><rect x="164" y="56" width="1" height="1" fill="#00ff00"/><rect x="165" y="56" width="1" height="1" fill="#00ff00"/><rect x="166" y="56" width="1" height="1" fill="#00ff00"/><rect x="167" y="55" width="1" height="1" fill="#00ff00"/><rect x="168" y="57" width="1" height="1" fill="#00ff00"/><rect x="169" y="57" width="1" height="1" fill="#00ff00"/><rect x="170" y="55" width="1" height="1" fill="#00ff00"/><rect x="171" y="55" width="1" height="1" fill="#00ff00"/><rect x="172" y="56" width="1" height="1" fill="#00ff00"/><rect x="173" y="56" width="1" height="1" fill="#00ff00"/><rect x="174" y="55" width="1" height="1" fill="#00ff00"/><rect x="175" y="56" width="1" height="1" fill="#00ff00"/><rect x="176" y="55" width="1" height="1" fill="#00ff00"/><rect x="177" y="56" width="1" height="1" fill="#00ff00"/><rect x="178" y="56" width="1" height="1" fill="#00ff00"/><rect x="179" y="56" width="1" height="1" fill="#00ff00"/><rect x="180" y="56" width="1" height="1" fill="#00ff00"/><rect x="181" y="57" width="1" height="1" fill="#00ff00"/><rect x="182" y="56" width="1" height="1" fill="#00ff00"/><rect x="183" y="55" width="1" height="1" fill="#00ff00"/><rect x="184" y="56" width="1" height="1" fill="#00ff00"/><rect x="185" y="56" width="1" height="1" fill="#00ff00"/><rect x="186" y="56" width="1" height="1" fill="#00ff00"/><rect x="187" y="56" width="1" height="1" fill="#00ff00"/><rect x="188" y="57" width="1" height="1" fill="#00ff00"/><rect x="189" y="56" width="1" height="1" fill="#00ff00"/><rect x="190" y="56" width="1" height="1" fill="#00ff00"/><rect x="191" y="56" width="1" height="1" fill="#00ff00"/><rect x="192" y="56" width="1" height="1" fill="#00ff00"/><rect x="193" y="56" width="1" height="1" fill="#00ff00"/><rect x="194" y="56" width="1" height="1" fill="#00ff00"/><rect x="195" y="57" width="1" height="1" fill="#00ff00"/><rect x="196" y="56" width="1" height="1" fill="#00ff00"/><rect x="197" y="56" width="1" height="1" fill="#00ff00"/><rect x="198" y="55" width="1" height="1" fill="#00ff00"/><rect x="199" y="55" width="1" height="1" fill="#00ff00"/><rect x="200" y="57" width="1" height="1" fill="#00ff00"/><rect x="201" y="57" width="1" height="1" fill="#00ff00"/><rect x="202" y="56" width="1" height="1" fill="#00ff00"/><rect x="203" y="56" width="1" height="1" fill="#00ff00"/><rect x="204" y="56" width="1" height="1" fill="#00ff00"/><rect x="205" y="56" width="1" height="1" fill="#00ff00"/><rect x="206" y="56" width="1" height="1" fill="#00ff00"/><rect x="207" y="56" width="1" height="1" fill="#00ff00"/><rect x="208" y="56" width="1" height="1" fill="#00ff00"/><rect x="209" y="57" width="1" height="1" fill="#00ff00"/><rect x="210" y="57" width="1" height="1" fill="#00ff00"/><rect x="211" y="57" width="1" height="1" fill="#00ff00"/><rect x="212" y="57" width="1" height="1" fill="#00ff00"/><rect x="213" y="56" width="1" height="1" fill="#00ff00"/><rect x="214" y="56" width="1" height="1" fill="#00ff00"/><rect x="215" y="56" width="1" height="1" fill="#00ff00"/><rect x="216" y="56" width="1" height="1" fill="#00ff00"/><rect x="217" y="56" width="1" height="1" fill="#00ff00"/><rect x="218" y="56" width="1" height="1" fill="#00ff00"/><rect x="219" y="55" width="1" height="1" fill="#00ff00"/><rect x="220" y="56" width="1" height="1" fill="#00ff00"/><rect x="221" y="56" width="1" height="1" fill="#00ff00"/><rect x="222" y="56" width="1" height="1" fill="#00ff00"/><rect x="223" y="56" width="1" height="1" fill="#00ff00"/><rect x="224" y="56" width="1" height="1" fill="#00ff00"/><rect x="225" y="55" width="1" height="1" fill="#00ff00"/><rect x="226" y="56" width="1" height="1" fill="#00ff00"/><rect x="227" y="56" width="1" height="1" fill="#00ff00"/><rect x="228" y="56" width="1" height="1" fill="#00ff00"/><rect x="229" y="56" width="1" height="1" fill="#00ff00"/><rect x="230" y="56" width="1" height="1" fill="#00ff00"/><rect x="231" y="56" width="1" height="1" fill="#00ff00"/><rect x="232" y="56" width="1" height="1" fill="#00ff00"/><rect x="233" y="56" width="1" height="1" fill="#00ff00"/><rect x="234" y="55" width="1" height="1" fill="#00ff00"/><rect x="235" y="55" width="1" height="1" fill="#00ff00"/><rect x="236" y="55" width="1" height="1" fill="#00ff00"/><rect x="237" y="56" width="1" height="1" fill="#00ff00"/><rect x="238" y="56" width="1" height="1" fill="#00ff00"/><rect x="239" y="55" width="1" height="1" fill="#00ff00"/><rect x="240" y="56" width="1" height="1" fill="#00ff00"/><rect x="241" y="56" width="1" height="1" fill="#00ff00"/><rect x="242" y="56" width="1" height="1" fill="#00ff00"/><rect x="243" y="56" width="1" height="1" fill="#00ff00"/><rect x="244" y="56" width="1" height="1" fill="#00ff00"/><rect x="245" y="55" width="1" height="1" fill="#00ff00"/><rect x="246" y="55" width="1" height="1" fill="#00ff00"/><rect x="247" y="56" width="1" height="1" fill="#00ff00"/><rect x="248" y="56" width="1" height="1" fill="#00ff00"/><rect x="249" y="56" width="1" height="1" fill="#00ff00"/><rect x="250" y="56" width="1" height="1" fill="#00ff00"/><rect x="251" y="56" width="1" height="1" fill="#00ff00"/><rect x="252" y="56" width="1" height="1" fill="#00ff00"/><rect x="253" y="56" width="1" height="1" fill="#00ff00"/><rect x="254" y="57" width="1" height="1" fill="#00ff00"/><rect x="255" y="57" width="1" height="1" fill="#00ff00"/><rect x="256" y="57" width="1" height="1" fill="#00ff00"/><rect x="257" y="57" width="1" height="1" fill="#00ff00"/><rect x="258" y="56" width="1" height="1" fill="#00ff00"/><rect x="259" y="57" width="1" height="1" fill="#00ff00"/><rect x="260" y="56" width="1" height="1" fill="#00ff00"/><rect x="261" y="55" width="1" height="1" fill="#00ff00"/><rect x="262" y="56" width="1" height="1" fill="#00ff00"/><rect x="263" y="56" width="1" height="1" fill="#00ff00"/><rect x="264" y="56" width="1" height="1" fill="#00ff00"/><rect x="265" y="56" width="1" height="1" fill="#00ff00"/><rect x="266" y="56" width="1" height="1" fill="#00ff00"/><rect x="267" y="56" width="1" height="1" fill="#00ff00"/><rect x="268" y="56" width="1" height="1" fill="#00ff00"/><rect x="269" y="56" width="1" height="1" fill="#00ff00"/><rect x="270" y="56" width="1" height="1" fill="#00ff00"/><rect x="271" y="56" width="1" height="1" fill="#00ff00"/><rect x="272" y="55" width="1" height="1" fill="#00ff00"/><rect x="273" y="56" width="1" height="1" fill="#00ff00"/><rect x="274" y="57" width="1" height="1" fill="#00ff00"/><rect x="275" y="55" width="1" height="1" fill="#00ff00"/><rect x="276" y="56" width="1" height="1" fill="#00ff00"/><rect x="277" y="55" width="1" height="1" fill="#00ff00"/><rect x="278" y="56" width="1" height="1" fill="#00ff00"/><rect x="279" y="56" width="1" height="1" fill="#00ff00"/><rect x="280" y="56" width="1" height="1" fill="#00ff00"/><rect x="281" y="56" width="1" height="1" fill="#00ff00"/><rect x="282" y="56" width="1" height="1" fill="#00ff00"/><rect x="283" y="56" width="1" height="1" fill="#00ff00"/><rect x="284" y="56" width="1" height="1" fill="#00ff00"/><rect x="285" y="55" width="1" height="1" fill="#00ff00"/><rect x="286" y="56" width="1" height="1" fill="#00ff00"/><rect x="287" y="57" width="1" height="1" fill="#00ff00"/><rect x="288" y="57" width="1" height="1" fill="#00ff00"/><rect x="289" y="56" width="1" height="1" fill="#00ff00"/><rect x="290" y="56" width="1" height="1" fill="#00ff00"/><rect x="291" y="56" width="1" height="1" fill="#00ff00"/><rect x="292" y="56" width="1" height="1" fill="#00ff00"/><rect x="293" y="56" width="1" height="1" fill="#00ff00"/><rect x="294" y="56" width="1" height="1" fill="#00ff00"/><rect x="295" y="56" width="1" height="1" fill="#00ff00"/><rect x="296" y="56" width="1" height="1" fill="#00ff00"/><rect x="297" y="56" width="1" height="1" fill="#00ff00"/><rect x="298" y="56" width="1" height="1" fill="#00ff00"/><rect x="299" y="56" width="1" height="1" fill="#00ff00"/><rect x="300" y="56" width="1" height="1" fill="#00ff00"/><rect x="301" y="56" width="1" height="1" fill="#00ff00"/><rect x="302" y="56" width="1" height="1" fill="#00ff00"/><rect x="303" y="56" width="1" height="1" fill="#00ff00"/><rect x="304" y="56" width="1" height="1" fill="#00ff00"/><rect x="305" y="56" width="1" height="1" fill="#00ff00"/><rect x="306" y="57" width="1" height="1" fill="#00ff00"/><rect x="307" y="56" width="1" height="1" fill="#00ff00"/><rect x="308" y="56" width="1" height="1" fill="#00ff00"/><rect x="309" y="56" width="1" height="1" fill="#00ff00"/><rect x="310" y="55" width="1" height="1" fill="#00ff00"/><rect x="311" y="55" width="1" height="1" fill="#00ff00"/><rect x="312" y="56" width="1" height="1" fill="#00ff00"/><rect x="313" y="55" width="1" height="1" fill="#00ff00"/><rect x="314" y="57" width="1" height="1" fill="#00ff00"/><rect x="315" y="55" width="1" height="1" fill="#00ff00"/><rect x="316" y="56" width="1" height="1" fill="#00ff00"/><rect x="317" y="56" width="1" height="1" fill="#00ff00"/><rect x="318" y="56" width="1" height="1" fill="#00ff00"/><rect x="319" y="55" width="1" height="1" fill="#00ff00"/><rect x="320" y="56" width="1" height="1" fill="#00ff00"/><rect x="321" y="56" width="1" height="1" fill="#00ff00"/><rect x="322" y="55" width="1" height="1" fill="#00ff00"/><rect x="323" y="56" width="1" height="1" fill="#00ff00"/><rect x="324" y="56" width="1" height="1" fill="#00ff00"/><rect x="325" y="57" width="1" height="1" fill="#00ff00"/><rect x="326" y="56" width="1" height="1" fill="#00ff00"/><rect x="327" y="56" width="1" height="1" fill="#00ff00"/><rect x="328" y="56" width="1" height="1" fill="#00ff00"/><rect x="329" y="56" width="1" height="1" fill="#00ff00"/><rect x="330" y="56" width="1" height="1" fill="#00ff00"/><rect x="331" y="55" width="1" height="1" fill="#00ff00"/><rect x="332" y="56" width="1" height="1" fill="#00ff00"/><rect x="333" y="56" width="1" height="1" fill="#00ff00"/><rect x="334" y="56" width="1" height="1" fill="#00ff00"/><rect x="335" y="57" width="1" height="1" fill="#00ff00"/><rect x="336" y="56" width="1" height="1" fill="#00ff00"/><rect x="337" y="56" width="1" height="1" fill="#00ff00"/><rect x="338" y="55" width="1" height="1" fill="#00ff00"/><rect x="339" y="56" width="1" height="1" fill="#00ff00"/><rect x="340" y="56" width="1" height="1" fill="#00ff00"/><rect x="341" y="55" width="1" height="1" fill="#00ff00"/><rect x="342" y="56" width="1" height="1" fill="#00ff00"/><rect x="343" y="56" width="1" height="1" fill="#00ff00"/><rect x="344" y="56" width="1" height="1" fill="#00ff00"/><rect x="345" y="55" width="1" height="1" fill="#00ff00"/><rect x="345" y="58" width="1" height="1" fill="#00ff00"/><rect x="346" y="59" width="1" height="1" fill="#00ff00"/><rect x="347" y="64" width="1" height="1" fill="#00ff00"/><rect x="348" y="77" width="1" height="1" fill="#00ff00"/><rect x="349" y="97" width="1" height="1" fill="#00ff00"/><rect x="350" y="130" width="1" height="1" fill="#00ff00"/><rect x="351" y="161" width="1" height="1" fill="#00ff00"/><rect x="352" y="201" width="1" height="1" fill="#00ff00"/><rect x="353" y="240" width="1" height="1" fill="#00ff00"/><rect x="354" y="277" width="1" height="1" fill="#00ff00"/><rect x="355" y="302" width="1" height="1" fill="#00ff00"/><rect x="356" y="320" width="1" height="1" fill="#00ff00"/><rect x="357" y="328" width="1" height="1" fill="#00ff00"/><rect x="358" y="331" width="1" height="1" fill="#00ff00"/><rect x="359" y="331" width="1" height="1" fill="#00ff00"/><rect x="360" y="331" width="1" height="1" fill="#00ff00"/><rect x="361" y="329" width="1" height="1" fill="#00ff00"/><rect x="362" y="329" width="1" height="1" fill="#00ff00"/><rect x="363" y="330" width="1" height="1" fill="#00ff00"/><rect x="364" y="332" width="1" height="1" fill="#00ff00"/><rect x="365" y="332" width="1" height="1" fill="#00ff00"/><rect x="366" y="333" width="1" height="1" fill="#00ff00"/><rect x="367" y="333" width="1" height="1" fill="#00ff00"/><rect x="368" y="333" width="1" height="1" fill="#00ff00"/><rect x="369" y="334" width="1" height="1" fill="#00ff00"/><rect x="370" y="334" width="1" height="1" fill="#00ff00"/><rect x="371" y="333" width="1" height="1" fill="#00ff00"/><rect x="372" y="333" width="1" height="1" fill="#00ff00"/><rect x="373" y="333" width="1" height="1" fill="#00ff00"/><rect x="374" y="333" width="1" height="1" fill="#00ff00"/><rect x="375" y="331" width="1" height="1" fill="#00ff00"/><rect x="376" y="331" width="1" height="1" fill="#00ff00"/><rect x="377" y="331" width="1" height="1" fill="#00ff00"/><rect x="378" y="331" width="1" height="1" fill="#00ff00"/><rect x="379" y="331" width="1" height="1" fill="#00ff00"/><rect x="380" y="330" width="1" height="1" fill="#00ff00"/><rect x="381" y="332" width="1" height="1" fill="#00ff00"/><rect x="382" y="332" width="1" height="1" fill="#00ff00"/><rect x="383" y="332" width="1" height="1" fill="#00ff00"/><rect x="384" y="333" width="1" height="1" fill="#00ff00"/><rect x="385" y="333" width="1" height="1" fill="#00ff00"/><rect x="386" y="333" width="1" height="1" fill="#00ff00"/><rect x="387" y="333" width="1" height="1" fill="#00ff00"/><rect x="388" y="334" width="1" height="1" fill="#00ff00"/><rect x="389" y="332" width="1" height="1" fill="#00ff00"/><rect x="390" y="334" width="1" height="1" fill="#00ff00"/><rect x="391" y="333" width="1" height="1" fill="#00ff00"/><rect x="392" y="332" width="1" height="1" fill="#00ff00"/><rect x="393" y="334" width="1" height="1" fill="#00ff00"/><rect x="394" y="333" width="1" height="1" fill="#00ff00"/><rect x="395" y="333" width="1" height="1" fill="#00ff00"/><rect x="396" y="333" width="1" height="1" fill="#00ff00"/><rect x="397" y="332" width="1" height="1" fill="#00ff00"/><rect x="398" y="334" width="1" height="1" fill="#00ff00"/><rect x="399" y="333" width="1" height="1" fill="#00ff00"/><rect x="400" y="333" width="1" height="1" fill="#00ff00"/><rect x="401" y="333" width="1" height="1" fill="#00ff00"/><rect x="402" y="334" width="1" height="1" fill="#00ff00"/><rect x="403" y="334" width="1" height="1" fill="#00ff00"/><rect x="404" y="333" width="1" height="1" fill="#00ff00"/><rect x="405" y="333" width="1" height="1" fill="#00ff00"/><rect x="406" y="334" width="1" height="1" fill="#00ff00"/><rect x="407" y="333" width="1" height="1" fill="#00ff00"/><rect x="408" y="333" width="1" height="1" fill="#00ff00"/><rect x="409" y="333" width="1" height="1" fill="#00ff00"/><rect x="410" y="332" width="1" height="1" fill="#00ff00"/><rect x="411" y="333" width="1" height="1" fill="#00ff00"/><rect x="412" y="332" width="1" height="1" fill="#00ff00"/><rect x="413" y="333" width="1" height="1" fill="#00ff00"/><rect x="414" y="333" width="1" height="1" fill="#00ff00"/><rect x="415" y="333" width="1" height="1" fill="#00ff00"/><rect x="416" y="333" width="1" height="1" fill="#00ff00"/><rect x="417" y="333" width="1" height="1" fill="#00ff00"/><rect x="418" y="332" width="1" height="1" fill="#00ff00"/><rect x="419" y="332" width="1" height="1" fill="#00ff00"/><rect x="420" y="333" width="1" height="1" fill="#00ff00"/><rect x="421" y="332" width="1" height="1" fill="#00ff00"/><rect x="422" y="332" width="1" height="1" fill="#00ff00"/><rect x="423" y="332" width="1" height="1" fill="#00ff00"/><rect x="424" y="332" width="1" height="1" fill="#00ff00"/><rect x="425" y="332" width="1" height="1" fill="#00ff00"/><rect x="426" y="333" width="1" height="1" fill="#00ff00"/><rect x="427" y="333" width="1" height="1" fill="#00ff00"/><rect x="428" y="333" width="1" height="1" fill="#00ff00"/><rect x="429" y="332" width="1" height="1" fill="#00ff00"/><rect x="430" y="333" width="1" height="1" fill="#00ff00"/><rect x="431" y="332" width="1" height="1" fill="#00ff00"/><rect x="432" y="333" width="1" height="1" fill="#00ff00"/><rect x="433" y="332" width="1" height="1" fill="#00ff00"/><rect x="434" y="332" width="1" height="1" fill="#00ff00"/><rect x="435" y="332" width="1" height="1" fill="#00ff00"/><rect x="436" y="333" width="1" height="1" fill="#00ff00"/><rect x="437" y="333" width="1" height="1" fill="#00ff00"/><rect x="438" y="332" width="1" height="1" fill="#00ff00"/><rect x="439" y="333" width="1" height="1" fill="#00ff00"/><rect x="440" y="333" width="1" height="1" fill="#00ff00"/><rect x="441" y="332" width="1" height="1" fill="#00ff00"/><rect x="442" y="333" width="1" height="1" fill="#00ff00"/><rect x="443" y="333" width="1" height="1" fill="#00ff00"/><rect x="444" y="333" width="1" height="1" fill="#00ff00"/><rect x="445" y="333" width="1" height="1" fill="#00ff00"/><rect x="446" y="333" width="1" height="1" fill="#00ff00"/><rect x="447" y="333" width="1" height="1" fill="#00ff00"/><rect x="448" y="333" width="1" height="1" fill="#00ff00"/><rect x="449" y="333" width="1" height="1" fill="#00ff00"/><rect x="450" y="333" width="1" height="1" fill="#00ff00"/><rect x="451" y="333" width="1" height="1" fill="#00ff00"/><rect x="452" y="333" width="1" height="1" fill="#00ff00"/><rect x="453" y="333" width="1" height="1" fill="#00ff00"/><rect x="454" y="333" width="1" height="1" fill="#00ff00"/><rect x="455" y="333" width="1" height="1" fill="#00ff00"/><rect x="456" y="332" width="1" height="1" fill="#00ff00"/><rect x="457" y="332" width="1" height="1" fill="#00ff00"/><rect x="458" y="332" width="1" height="1" fill="#00ff00"/><rect x="459" y="333" width="1" height="1" fill="#00ff00"/><rect x="460" y="332" width="1" height="1" fill="#00ff00"/><rect x="461" y="332" width="1" height="1" fill="#00ff00"/><rect x="462" y="332" width="1" height="1" fill="#00ff00"/><rect x="463" y="333" width="1" height="1" fill="#00ff00"/><rect x="464" y="333" width="1" height="1" fill="#00ff00"/><rect x="465" y="333" width="1" height="1" fill="#00ff00"/><rect x="466" y="332" width="1" height="1" fill="#00ff00"/><rect x="467" y="332" width="1" height="1" fill="#00ff00"/><rect x="468" y="332" width="1" height="1" fill="#00ff00"/><rect x="469" y="333" width="1" height="1" fill="#00ff00"/><rect x="470" y="332" width="1" height="1" fill="#00ff00"/><rect x="471" y="333" width="1" height="1" fill="#00ff00"/><rect x="472" y="332" width="1" height="1" fill="#00ff00"/><rect x="473" y="333" width="1" height="1" fill="#00ff00"/><rect x="474" y="333" width="1" height="1" fill="#00ff00"/><rect x="475" y="333" width="1" height="1" fill="#00ff00"/><rect x="476" y="332" width="1" height="1" fill="#00ff00"/><rect x="477" y="333" width="1" height="1" fill="#00ff00"/><rect x="478" y="333" width="1" height="1" fill="#00ff00"/><rect x="479" y="333" width="1" height="1" fill="#00ff00"/><rect x="480" y="332" width="1" height="1" fill="#00ff00"/><rect x="481" y="333" width="1" height="1" fill="#00ff00"/><rect x="482" y="333" width="1" height="1" fill="#00ff00"/><rect x="483" y="333" width="1" height="1" fill="#00ff00"/><rect x="484" y="332" width="1" height="1" fill="#00ff00"/><rect x="485" y="333" width="1" height="1" fill="#00ff00"/><rect x="486" y="332" width="1" height="1" fill="#00ff00"/><rect x="487" y="332" width="1" height="1" fill="#00ff00"/><rect x="488" y="332" width="1" height="1" fill="#00ff00"/><rect x="489" y="333" width="1" height="1" fill="#00ff00"/><rect x="490" y="332" width="1" height="1" fill="#00ff00"/><rect x="491" y="332" width="1" height="1" fill="#00ff00"/><rect x="492" y="333" width="1" height="1" fill="#00ff00"/><rect x="493" y="332" width="1" height="1" fill="#00ff00"/><rect x="494" y="333" width="1" height="1" fill="#00ff00"/><rect x="495" y="333" width="1" height="1" fill="#00ff00"/><rect x="496" y="333" width="1" height="1" fill="#00ff00"/><rect x="497" y="333" width="1" height="1" fill="#00ff00"/><rect x="498" y="333" width="1" height="1" fill="#00ff00"/><rect x="499" y="333" width="1" height="1" fill="#00ff00"/><rect x="0" y="333" width="14" height="2" fill="#00ff00"/><rect x="8" y="333" width="2" height="10" fill="#00ff00"/><rect x="2" y="342" width="14" height="2" fill="#00ff00"/><path d="M2.5 432.5L5.5 428M6.5 432.5L9.5 428M10.5 432.5L13.5 428M14 431L15.5 428" stroke="#00ff00" stroke-width="1.5" transform="translate(0,-84)" shape-rendering="auto"/><text x="18" y="338" font-family="Liberation Sans" font-weight="bold" font-size="12.5" textLength="14.5" lengthAdjust="spacingAndGlyphs" fill="#00ff00" shape-rendering="auto">C1</text><path d="M18 0h15l-7.5 16z" fill="#800000"/><text x="1" y="12" font-family="Liberation Sans" font-size="11" letter-spacing="-0.4" fill="#00ff00">1.800V</text><text x="3" y="366" font-family="Liberation Sans" font-size="11" letter-spacing="-0.3" fill="#00ff00">-200.0mV</text><text x="497" y="366" text-anchor="end" font-family="Liberation Sans" font-size="11" fill="#00ff00">5.000ns/div</text></svg>
<div style="left:30px;top:83px;width:500px;height:1px;background:#dfdfdf;"></div>
<div style="left:6px;top:411px;width:16px;height:14px;background:#fff;"></div>
<div style="left:6px;top:425px;width:17px;height:1px;background:#000;"></div>
<div class="t" style="left:7px;top:412px;font-size:12px;line-height:12px;color:#000;font-weight:normal;font-family:'Liberation Sans', sans-serif;letter-spacing:-0.4px">C1</div>
<svg style="left:21px;top:410px" width="10" height="17"><path d="M1.5 1L8.3 8 1.5 15z" fill="#00ff00" stroke="#000" stroke-width="0.9"/></svg>
<div style="left:6px;top:456px;width:638px;height:1px;background:#808080;"></div>
<div style="left:6px;top:457px;width:638px;height:1px;background:#fff;"></div>
<div class="b" style="left:6px;top:459px;width:44px;height:23px;background:#c0c0c0;"></div>
<div style="left:7px;top:461px;width:5px;height:20px;background:#00ff00;"></div>
<div class="t" style="left:14px;top:465px;font-size:12px;line-height:12px;color:#000;font-weight:normal;font-family:'Liberation Sans', sans-serif;letter-spacing:-0.6px">C1</div>
<svg style="left:34px;top:467px" width="10" height="6"><path d="M5 0L10 6H0z" fill="#000"/></svg>
<div class="s" style="left:67px;top:460px;width:82px;height:22px;background:#fff;"></div>
<div class="t" style="left:69px;top:464px;font-size:11px;line-height:11px;color:#000;font-weight:normal;font-family:'Liberation Sans', sans-serif;">200.0mV/</div>
<div class="b" style="left:118px;top:462px;width:14px;height:18px;background:#c0c0c0;"></div>
<svg style="left:118px;top:462px" width="14" height="18"><g fill="none" stroke="#000" shape-rendering="crispEdges"><rect x="3.5" y="3.5" width="7" height="9"/><rect x="5.5" y="5.5" width="3" height="2"/><path d="M5 10.5h1M8 10.5h1"/></g><path d="M11 4v10" stroke="#808080"/></svg>
<div class="b" style="left:133px;top:462px;width:14px;height:9px;background:#c0c0c0;"></div>
<div class="b" style="left:133px;top:471px;width:14px;height:9px;background:#c0c0c0;"></div>
<div style="left:139px;top:465px;width:1px;height:1px;background:#000;"></div>
<div style="left:138px;top:466px;width:3px;height:1px;background:#000;"></div>
<div style="left:138px;top:474px;width:3px;height:1px;background:#000;"></div>
<div style="left:139px;top:475px;width:1px;height:1px;background:#000;"></div>
<div class="s" style="left:152px;top:460px;width:83px;height:22px;background:#fff;"></div>
<div class="t" style="left:154px;top:464px;font-size:11px;line-height:11px;color:#000;font-weight:normal;font-family:'Liberation Sans', sans-serif;">0.0V</div>
<div class="b" style="left:203px;top:462px;width:14px;height:18px;background:#c0c0c0;"></div>
<svg style="left:203px;top:462px" width="14" height="18"><g fill="none" stroke="#000" shape-rendering="crispEdges"><rect x="3.5" y="3.5" width="7" height="9"/><rect x="5.5" y="5.5" width="3" height="2"/><path d="M5 10.5h1M8 10.5h1"/></g><path d="M11 4v10" stroke="#808080"/></svg>
<div class="b" style="left:218px;top:462px;width:15px;height:9px;background:#c0c0c0;"></div>
<div class="b" style="left:218px;top:471px;width:15px;height:9px;background:#c0c0c0;"></div>
<div style="left:224px;top:465px;width:1px;height:1px;background:#000;"></div>
<div style="left:223px;top:466px;width:3px;height:1px;background:#000;"></div>
<div style="left:223px;top:474px;width:3px;height:1px;background:#000;"></div>
<div style="left:224px;top:475px;width:1px;height:1px;background:#000;"></div>
<div class="s" style="left:253px;top:459px;width:30px;height:22px;background:#fff;"></div>
<div class="t" style="left:257px;top:464px;font-size:11px;line-height:11px;color:#000;font-weight:normal;font-family:'Liberation Sans', sans-serif;">Main</div>
<div class="b" style="left:283px;top:459px;width:30px;height:23px;background:#c0c0c0;"></div>
<div class="b" style="left:313px;top:459px;width:30px;height:23px;background:#c0c0c0;"></div>
<svg style="left:283px;top:459px" width="30" height="23"><circle cx="12" cy="9.5" r="5.3" fill="#fff" stroke="#000" stroke-width="1.5"/><text x="12" y="13.2" text-anchor="middle" font-family="Liberation Sans" font-weight="bold" font-size="10" fill="#000">1</text><path d="M15.5 13l6 6" stroke="#000" stroke-width="2.5"/></svg>
<svg style="left:313px;top:459px" width="30" height="23"><circle cx="12" cy="9.5" r="5.3" fill="#fff" stroke="#000" stroke-width="1.5"/><text x="12" y="13.2" text-anchor="middle" font-family="Liberation Sans" font-weight="bold" font-size="10" fill="#000">2</text><path d="M15.5 13l6 6" stroke="#000" stroke-width="2.5"/></svg>
<div class="s" style="left:361px;top:460px;width:88px;height:22px;background:#fff;"></div>
<div class="t" style="left:363px;top:464px;font-size:11px;line-height:11px;color:#000;font-weight:normal;font-family:'Liberation Sans', sans-serif;">5.00000ns</div>
<div class="b" style="left:419px;top:462px;width:14px;height:18px;background:#c0c0c0;"></div>
<svg style="left:419px;top:462px" width="14" height="18"><g fill="none" stroke="#000" shape-rendering="crispEdges"><rect x="3.5" y="3.5" width="7" height="9"/><rect x="5.5" y="5.5" width="3" height="2"/><path d="M5 10.5h1M8 10.5h1"/></g><path d="M11 4v10" stroke="#808080"/></svg>
<div class="b" style="left:434px;top:462px;width:13px;height:9px;background:#c0c0c0;"></div>
<div class="b" style="left:434px;top:471px;width:13px;height:9px;background:#c0c0c0;"></div>
<div style="left:439px;top:465px;width:1px;height:1px;background:#000;"></div>
<div style="left:438px;top:466px;width:3px;height:1px;background:#000;"></div>
<div style="left:438px;top:474px;width:3px;height:1px;background:#000;"></div>
<div style="left:439px;top:475px;width:1px;height:1px;background:#000;"></div>
<div class="s" style="left:453px;top:460px;width:79px;height:22px;background:#fff;"></div>
<div class="t" style="left:455px;top:464px;font-size:11px;line-height:11px;color:#000;font-weight:normal;font-family:'Liberation Sans', sans-serif;">21.500n</div>
<div class="b" style="left:501px;top:462px;width:14px;height:18px;background:#c0c0c0;"></div>
<svg style="left:501px;top:462px" width="14" height="18"><g fill="none" stroke="#000" shape-rendering="crispEdges"><rect x="3.5" y="3.5" width="7" height="9"/><rect x="5.5" y="5.5" width="3" height="2"/><path d="M5 10.5h1M8 10.5h1"/></g><path d="M11 4v10" stroke="#808080"/></svg>
<div class="b" style="left:516px;top:462px;width:14px;height:9px;background:#c0c0c0;"></div>
<div class="b" style="left:516px;top:471px;width:14px;height:9px;background:#c0c0c0;"></div>
<div style="left:522px;top:465px;width:1px;height:1px;background:#000;"></div>
<div style="left:521px;top:466px;width:3px;height:1px;background:#000;"></div>
<div style="left:521px;top:474px;width:3px;height:1px;background:#000;"></div>
<div style="left:522px;top:475px;width:1px;height:1px;background:#000;"></div>
<div style="left:533px;top:458px;width:111px;height:24px;box-shadow:inset 1px 1px #fff, inset -1px -1px #fff"></div>
<div style="left:6px;top:483px;width:638px;height:1px;background:#dfdfdf;"></div>
<div style="left:448px;top:457px;width:200px;height:34px;background:rgba(255,255,255,0.25)"></div>
<div class='t' style="left:464px;top:464px;font-size:19.2px;line-height:22px;color:rgba(110,190,110,0.65);font-family:'Liberation Sans',sans-serif">www.cntronics.com</div>
</body></html>
